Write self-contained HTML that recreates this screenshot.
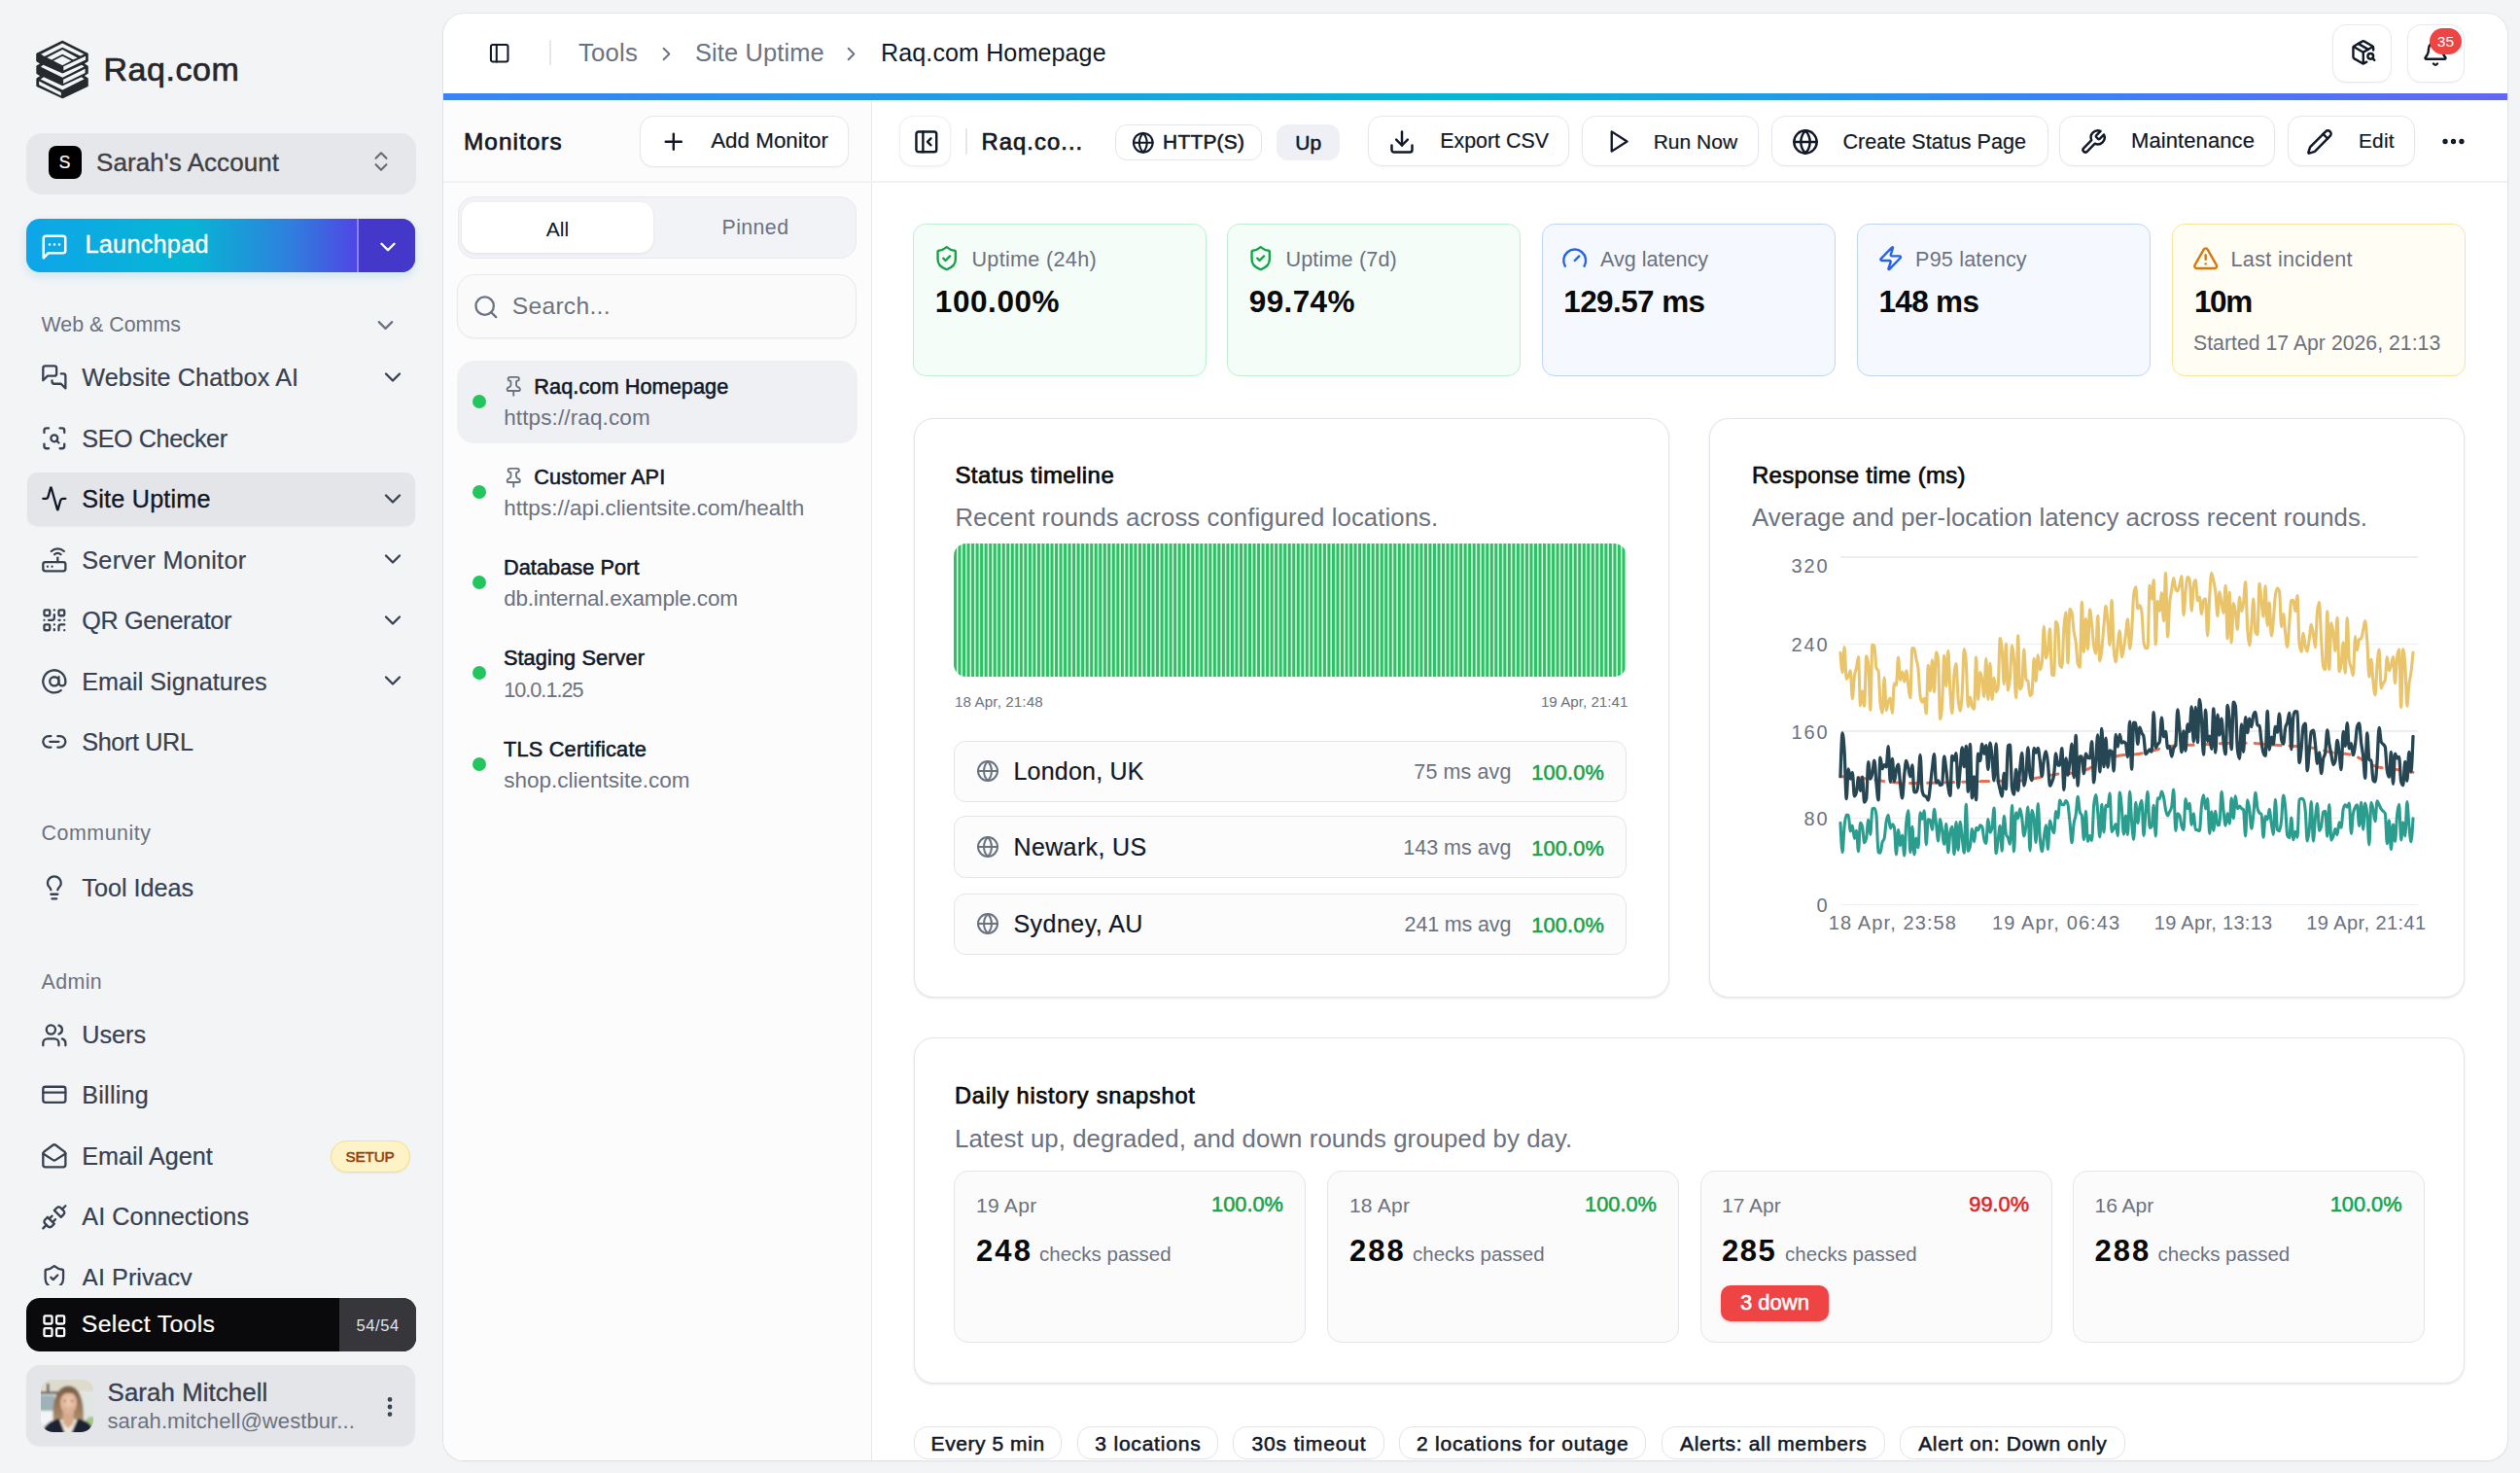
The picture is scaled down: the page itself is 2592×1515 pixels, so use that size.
<!DOCTYPE html><html><head><meta charset="utf-8"><style>*{margin:0;padding:0;box-sizing:border-box}html,body{width:2592px;height:1515px;overflow:hidden;background:#f3f4f6;font-family:"Liberation Sans",sans-serif}.a{position:absolute}.t{position:absolute;white-space:nowrap;line-height:1}svg.i{position:absolute;fill:none;stroke:currentColor;stroke-linecap:round;stroke-linejoin:round;overflow:visible}</style></head><body>
<svg class="a" style="left:30px;top:36px;width:70px;height:70px" viewBox="0 0 1473 1473">
<path fill="#262a2e" stroke="#262a2e" stroke-width="24" stroke-linejoin="round" d="M720 130 L1266 406 L1266 563 L1176 619 L1266 676 L1266 828 L1174 882 L1266 942 L1266 1105 L723 1360 L167 1105 L167 947 L256 882 L167 833 L167 671 L255 619 L165 563 L165 406 Z"/>
<g fill="#f3f4f6">
<path d="M254.8 416 L720.3 179.4 L1188.4 416 L1106.2 454.6 L720.3 266.8 L332 462.3 Z"/>
<path d="M386 490.6 L720.3 313.1 L1047 493.1 L949.3 531.7 L720.3 413.4 L486.3 534.3 Z"/>
<path d="M524.9 557.5 L720.3 459.7 L913.2 557.5 L720.3 655.2 Z"/>
<path d="M743.5 680.9 L1221.9 459.7 L1221.9 536.9 L743.5 768.4 Z"/>
<path d="M251 686.8 L305.3 648.8 L723.2 833.3 L1135.6 648.8 L1192.6 681.4 L723.2 920.1 Z"/>
<path d="M739.5 963.6 L1211.6 732.9 L1211.6 822.5 L739.5 1050.4 Z"/>
<path d="M245.6 958.1 L316.1 909.3 L723.2 1102 L1130.2 909.3 L1192.6 952.7 L723.2 1191.5 Z"/>
<path d="M213 1001.6 L690.6 1240.3 L690.6 1316.3 L213 1077.5 Z"/>
</g>
</svg>
<div class="t" style="top:54.42px;font-size:34px;color:#27272a;-webkit-text-stroke:0.7px #27272a;letter-spacing:0.525px;left:106.50px;">Raq.com</div>
<div class="a" style="left:27.00px;top:137.00px;width:401.00px;height:63.00px;background:#e5e7eb;border-radius:16px;"></div>
<div class="a" style="left:49.50px;top:150.00px;width:34.00px;height:34.00px;background:#000;border-radius:8px;"></div>
<div class="t" style="top:158.69px;font-size:17.5px;color:#fff;-webkit-text-stroke:0.2px #fff;left:-433.50px;width:1000px;text-align:center;">S</div>
<div class="t" style="top:154.49px;font-size:26px;color:#3f3f46;-webkit-text-stroke:0.35px #3f3f46;letter-spacing:0.065px;left:99.00px;">Sarah's Account</div>
<svg class="i" style="left:378.50px;top:153.00px;width:26px;height:26px;color:#6b6b73;" viewBox="0 0 24 24" stroke-width="2"><path d="m7 15 5 5 5-5"/><path d="m7 9 5-5 5 5"/></svg>
<div class="a" style="left:27.00px;top:225.00px;width:400.00px;height:55.00px;background:linear-gradient(90deg,#0ea5e9 0%,#06b6d4 42%,#2f7fdd 68%,#4f46e5 85%);border-radius:14px;box-shadow:0 4px 10px rgba(14,165,233,0.18);"></div>
<div class="a" style="left:367.50px;top:225.00px;width:59.50px;height:55.00px;background:#4338ca;border-top-right-radius:14px;border-bottom-right-radius:14px;"></div>
<div class="a" style="left:367.00px;top:225.00px;width:1.50px;height:55.00px;background:rgba(165,160,255,0.7);"></div>
<svg class="i" style="left:40.70px;top:238.80px;width:30px;height:30px;color:#fff;" viewBox="0 0 24 24" stroke-width="2"><path d="M21 15a2 2 0 0 1-2 2H7l-4 4V5a2 2 0 0 1 2-2h14a2 2 0 0 1 2 2z"/><path d="M8 10h.01"/><path d="M12 10h.01"/><path d="M16 10h.01"/></svg>
<div class="t" style="top:239.38px;font-size:25.3px;color:#fff;-webkit-text-stroke:0.35px #fff;letter-spacing:0.225px;left:87.50px;">Launchpad</div>
<svg class="i" style="left:386.00px;top:240.50px;width:26px;height:26px;color:#fff;" viewBox="0 0 24 24" stroke-width="2.2"><path d="m6 9 6 6 6-6"/></svg>
<div class="t" style="top:323.88px;font-size:21.4px;color:#6b7280;left:42.50px;">Web &amp; Comms</div>
<svg class="i" style="left:383.20px;top:320.50px;width:27px;height:27px;color:#6b7280;" viewBox="0 0 24 24" stroke-width="2"><path d="m6 9 6 6 6-6"/></svg>
<div class="a" style="left:27.80px;top:485.70px;width:399.20px;height:54.90px;background:#e4e5e9;border-radius:10px;box-shadow:0 1px 2px rgba(0,0,0,0.04);"></div>
<svg class="i" style="left:42.35px;top:374.05px;width:27.7px;height:27.7px;color:#374151;" viewBox="0 0 24 24" stroke-width="2"><path d="M14 9a2 2 0 0 1-2 2H6l-4 4V4a2 2 0 0 1 2-2h8a2 2 0 0 1 2 2z"/><path d="M18 9h2a2 2 0 0 1 2 2v11l-4-4h-6a2 2 0 0 1-2-2v-1"/></svg>
<div class="t" style="top:376.17px;font-size:25.2px;color:#374151;-webkit-text-stroke:0.2px #374151;letter-spacing:0.122px;left:84.30px;">Website Chatbox AI</div>
<svg class="i" style="left:390.00px;top:373.90px;width:28px;height:28px;color:#374151;" viewBox="0 0 24 24" stroke-width="2"><path d="m6 9 6 6 6-6"/></svg>
<svg class="i" style="left:42.35px;top:436.55px;width:27.7px;height:27.7px;color:#374151;" viewBox="0 0 24 24" stroke-width="2"><path d="M3 7V5a2 2 0 0 1 2-2h2"/><path d="M17 3h2a2 2 0 0 1 2 2v2"/><path d="M21 17v2a2 2 0 0 1-2 2h-2"/><path d="M7 21H5a2 2 0 0 1-2-2v-2"/><circle cx="12" cy="12" r="3"/><path d="m16 16-1.9-1.9"/></svg>
<div class="t" style="top:438.67px;font-size:25.2px;color:#374151;-webkit-text-stroke:0.2px #374151;letter-spacing:-0.423px;left:84.30px;">SEO Checker</div>
<svg class="i" style="left:42.35px;top:499.05px;width:27.7px;height:27.7px;color:#111827;" viewBox="0 0 24 24" stroke-width="2"><path d="M22 12h-2.48a2 2 0 0 0-1.93 1.46l-2.35 8.36a.25.25 0 0 1-.48 0L9.24 2.18a.25.25 0 0 0-.48 0l-2.35 8.36A2 2 0 0 1 4.49 12H2"/></svg>
<div class="t" style="top:501.17px;font-size:25.2px;color:#111827;-webkit-text-stroke:0.35px #111827;letter-spacing:0.207px;left:84.30px;">Site Uptime</div>
<svg class="i" style="left:390.00px;top:498.90px;width:28px;height:28px;color:#374151;" viewBox="0 0 24 24" stroke-width="2"><path d="m6 9 6 6 6-6"/></svg>
<svg class="i" style="left:42.35px;top:561.55px;width:27.7px;height:27.7px;color:#374151;" viewBox="0 0 24 24" stroke-width="2"><rect width="20" height="8" x="2" y="14" rx="2"/><path d="M6.01 18H6"/><path d="M10.01 18H10"/><path d="M15 10v4"/><path d="M17.84 7.17a4 4 0 0 0-5.66 0"/><path d="M20.66 4.34a8 8 0 0 0-11.31 0"/></svg>
<div class="t" style="top:563.67px;font-size:25.2px;color:#374151;-webkit-text-stroke:0.2px #374151;letter-spacing:0.277px;left:84.30px;">Server Monitor</div>
<svg class="i" style="left:390.00px;top:561.40px;width:28px;height:28px;color:#374151;" viewBox="0 0 24 24" stroke-width="2"><path d="m6 9 6 6 6-6"/></svg>
<svg class="i" style="left:42.35px;top:624.05px;width:27.7px;height:27.7px;color:#374151;" viewBox="0 0 24 24" stroke-width="2"><rect width="5" height="5" x="3" y="3" rx="1"/><rect width="5" height="5" x="16" y="3" rx="1"/><rect width="5" height="5" x="3" y="16" rx="1"/><path d="M21 16h-3a2 2 0 0 0-2 2v3"/><path d="M21 21v.01"/><path d="M12 7v3a2 2 0 0 1-2 2H7"/><path d="M3 12h.01"/><path d="M12 3h.01"/><path d="M12 16v.01"/><path d="M16 12h1"/><path d="M21 12v.01"/><path d="M12 21v-1"/></svg>
<div class="t" style="top:626.17px;font-size:25.2px;color:#374151;-webkit-text-stroke:0.2px #374151;letter-spacing:-0.376px;left:84.30px;">QR Generator</div>
<svg class="i" style="left:390.00px;top:623.90px;width:28px;height:28px;color:#374151;" viewBox="0 0 24 24" stroke-width="2"><path d="m6 9 6 6 6-6"/></svg>
<svg class="i" style="left:42.35px;top:686.55px;width:27.7px;height:27.7px;color:#374151;" viewBox="0 0 24 24" stroke-width="2"><circle cx="12" cy="12" r="4"/><path d="M16 8v5a3 3 0 0 0 6 0v-1a10 10 0 1 0-4 8"/></svg>
<div class="t" style="top:688.67px;font-size:25.2px;color:#374151;-webkit-text-stroke:0.2px #374151;left:84.30px;">Email Signatures</div>
<svg class="i" style="left:390.00px;top:686.40px;width:28px;height:28px;color:#374151;" viewBox="0 0 24 24" stroke-width="2"><path d="m6 9 6 6 6-6"/></svg>
<svg class="i" style="left:42.35px;top:749.05px;width:27.7px;height:27.7px;color:#374151;" viewBox="0 0 24 24" stroke-width="2"><path d="M9 17H7A5 5 0 0 1 7 7h2"/><path d="M15 7h2a5 5 0 1 1 0 10h-2"/><line x1="8" x2="16" y1="12" y2="12"/></svg>
<div class="t" style="top:751.17px;font-size:25.2px;color:#374151;-webkit-text-stroke:0.2px #374151;letter-spacing:-0.371px;left:84.30px;">Short URL</div>
<div class="t" style="top:846.88px;font-size:21.4px;color:#6b7280;letter-spacing:0.546px;left:42.50px;">Community</div>
<svg class="i" style="left:42.35px;top:899.15px;width:27.7px;height:27.7px;color:#374151;" viewBox="0 0 24 24" stroke-width="2"><path d="M15 14c.2-1 .7-1.7 1.5-2.5 1-.9 1.5-2.2 1.5-3.5A6 6 0 0 0 6 8c0 1 .2 2.2 1.5 3.5.7.7 1.3 1.5 1.5 2.5"/><path d="M9 18h6"/><path d="M10 22h4"/></svg>
<div class="t" style="top:900.67px;font-size:25.2px;color:#374151;-webkit-text-stroke:0.2px #374151;left:84.30px;">Tool Ideas</div>
<div class="t" style="top:999.88px;font-size:21.4px;color:#6b7280;letter-spacing:0.4px;left:42.50px;">Admin</div>
<div class="a" style="left:0;top:0;width:455px;height:1322px;overflow:hidden">
<svg class="i" style="left:42.35px;top:1050.95px;width:27.7px;height:27.7px;color:#374151;" viewBox="0 0 24 24" stroke-width="2"><path d="M16 21v-2a4 4 0 0 0-4-4H6a4 4 0 0 0-4 4v2"/><circle cx="9" cy="7" r="4"/><path d="M22 21v-2a4 4 0 0 0-3-3.87"/><path d="M16 3.13a4 4 0 0 1 0 7.75"/></svg>
<div class="t" style="top:1052.47px;font-size:25.2px;color:#374151;-webkit-text-stroke:0.2px #374151;left:84.30px;">Users</div>
<svg class="i" style="left:42.35px;top:1112.45px;width:27.7px;height:27.7px;color:#374151;" viewBox="0 0 24 24" stroke-width="2"><rect width="20" height="14" x="2" y="5" rx="2"/><line x1="2" x2="22" y1="10" y2="10"/></svg>
<div class="t" style="top:1113.97px;font-size:25.2px;color:#374151;-webkit-text-stroke:0.2px #374151;letter-spacing:0.21px;left:84.30px;">Billing</div>
<svg class="i" style="left:42.35px;top:1175.15px;width:27.7px;height:27.7px;color:#374151;" viewBox="0 0 24 24" stroke-width="2"><path d="M21.2 8.4c.5.38.8.97.8 1.6v10a2 2 0 0 1-2 2H4a2 2 0 0 1-2-2V10a2 2 0 0 1 .8-1.6l8-6a2 2 0 0 1 2.4 0l8 6Z"/><path d="m22 10-8.97 5.7a1.94 1.94 0 0 1-2.06 0L2 10"/></svg>
<div class="t" style="top:1176.67px;font-size:25.2px;color:#374151;-webkit-text-stroke:0.2px #374151;left:84.30px;">Email Agent</div>
<svg class="i" style="left:42.35px;top:1237.55px;width:27.7px;height:27.7px;color:#374151;" viewBox="0 0 24 24" stroke-width="2"><path d="m19 5 3-3"/><path d="m2 22 3-3"/><path d="M6.3 20.3a2.4 2.4 0 0 0 3.4 0L12 18l-6-6-2.3 2.3a2.4 2.4 0 0 0 0 3.4Z"/><path d="M7.5 13.5 10 11"/><path d="M10.5 16.5 13 14"/><path d="m12 6 6 6 2.3-2.3a2.4 2.4 0 0 0 0-3.4l-2.6-2.6a2.4 2.4 0 0 0-3.4 0Z"/></svg>
<div class="t" style="top:1239.07px;font-size:25.2px;color:#374151;-webkit-text-stroke:0.2px #374151;letter-spacing:0.069px;left:84.30px;">AI Connections</div>
<svg class="i" style="left:42.35px;top:1300.15px;width:27.7px;height:27.7px;color:#374151;" viewBox="0 0 24 24" stroke-width="2"><path d="M20 13c0 5-3.5 7.5-7.66 8.95a1 1 0 0 1-.67-.01C7.5 20.5 4 18 4 13V6a1 1 0 0 1 1-1c2 0 4.5-1.2 6.24-2.72a1.17 1.17 0 0 1 1.52 0C14.51 3.81 17 5 19 5a1 1 0 0 1 1 1z"/><path d="m9 12 2 2 4-4"/></svg>
<div class="t" style="top:1301.67px;font-size:25.2px;color:#374151;-webkit-text-stroke:0.2px #374151;left:84.30px;">AI Privacy</div>
</div>
<div class="a" style="left:339.80px;top:1172.50px;width:81.90px;height:33.80px;background:#fef3c7;border:1.5px solid #f8de7e;border-radius:17px;box-shadow:0 1px 2px rgba(0,0,0,0.05);"></div>
<div class="t" style="top:1182.25px;font-size:15.3px;color:#92400e;-webkit-text-stroke:0.55px #92400e;letter-spacing:-0.2px;left:-119.40px;width:1000px;text-align:center;">SETUP</div>
<div class="a" style="left:27.00px;top:1335.00px;width:400.50px;height:55.30px;background:#0a0a0c;border-radius:14px;"></div>
<div class="a" style="left:349.00px;top:1335.00px;width:78.50px;height:55.30px;background:#36363b;border-top-right-radius:14px;border-bottom-right-radius:14px;"></div>
<svg class="i" style="left:41.90px;top:1349.90px;width:27.6px;height:27.6px;color:#fff;" viewBox="0 0 24 24" stroke-width="2"><rect width="7" height="7" x="3" y="3" rx="1"/><rect width="7" height="7" x="14" y="3" rx="1"/><rect width="7" height="7" x="14" y="14" rx="1"/><rect width="7" height="7" x="3" y="14" rx="1"/></svg>
<div class="t" style="top:1349.81px;font-size:24.8px;color:#fff;-webkit-text-stroke:0.2px #fff;letter-spacing:0.36px;left:83.80px;">Select Tools</div>
<div class="t" style="top:1354.53px;font-size:16.5px;color:#e4e4e7;letter-spacing:0.6px;left:-111.40px;width:1000px;text-align:center;">54/54</div>
<div class="a" style="left:27.00px;top:1404.00px;width:400.00px;height:83.00px;background:#e4e5e9;border-radius:14px;box-shadow:0 1px 2px rgba(0,0,0,0.05);"></div>
<svg class="a" style="left:41.8px;top:1419px;width:54px;height:54px" viewBox="0 0 54 54">
<defs><clipPath id="av"><path d="M11 0 H43 A11 11 0 0 1 54 11 V41 A13 13 0 0 1 41 54 H13 A13 13 0 0 1 0 41 V11 A11 11 0 0 1 11 0Z"/></clipPath>
<filter id="bl" x="-10%" y="-10%" width="120%" height="120%"><feGaussianBlur stdDeviation="0.85"/></filter>
<linearGradient id="hair" x1="0" y1="0" x2="0" y2="1"><stop offset="0" stop-color="#7d6049"/><stop offset="0.6" stop-color="#9a7b5e"/><stop offset="1" stop-color="#b39574"/></linearGradient>
<radialGradient id="skin" cx="0.5" cy="0.45" r="0.6"><stop offset="0" stop-color="#f0cdb4"/><stop offset="1" stop-color="#d9a98b"/></radialGradient>
</defs>
<g clip-path="url(#av)"><g filter="url(#bl)">
<rect x="-2" y="-2" width="58" height="58" fill="#e5e7e4"/>
<rect x="-2" y="-2" width="58" height="14" fill="#dedbcd"/>
<rect x="6" y="4" width="2.5" height="10" fill="#4a4944"/>
<rect x="-2" y="12" width="22" height="3" fill="#6f6e68"/>
<rect x="-2" y="16" width="16" height="16" fill="#9fb2b8"/>
<rect x="-2" y="32" width="15" height="14" fill="#f2f4f5"/>
<rect x="40" y="14" width="16" height="28" fill="#e1e6e3"/>
<ellipse cx="52" cy="44" rx="6" ry="6" fill="#a5c48b"/>
<path d="M13.5 46 C11 30 13 7 28 6.5 C42 6 45.5 28 43.5 46 Z" fill="url(#hair)"/>
<path d="M16 41 L22 56 L34 56 L40 41 Z" fill="#eee6da"/>
<path d="M22.5 31 L34 31 L33.5 45 L28 50 L23 45 Z" fill="#d8aa8c"/>
<ellipse cx="28.5" cy="24" rx="8.6" ry="11.8" fill="url(#skin)"/>
<path d="M19.5 17 C21 9.5 35 9 37.5 17 C34 12.5 24 12.5 19.5 17Z" fill="#7d6049"/>
<ellipse cx="25" cy="22" rx="1.3" ry="0.8" fill="#6a4a3a"/>
<ellipse cx="32" cy="22" rx="1.3" ry="0.8" fill="#6a4a3a"/>
<path d="M24 29.5 Q28.5 33.5 33 29.5 Q28.5 31.2 24 29.5Z" fill="#fbf3ee" stroke="#c88a7c" stroke-width="0.6"/>
<path d="M1 56 C3 46 11 41.5 19 40 L25 56 Z" fill="#1b2333"/>
<path d="M55 56 C54 46 46 41.5 38 40 L31 56 Z" fill="#1b2333"/>
</g></g></svg>
<div class="t" style="top:1420.16px;font-size:25.8px;color:#374151;-webkit-text-stroke:0.35px #374151;letter-spacing:0.097px;left:110.60px;">Sarah Mitchell</div>
<div class="t" style="top:1450.88px;font-size:22px;color:#6b7280;letter-spacing:0.094px;left:110.40px;">sarah.mitchell@westbur...</div>
<svg class="i" style="left:387.50px;top:1433.50px;width:26px;height:26px;color:#374151;" viewBox="0 0 24 24" stroke-width="2.4"><circle cx="12" cy="12" r="1"/><circle cx="12" cy="5" r="1"/><circle cx="12" cy="19" r="1"/></svg>
<div class="a" style="left:456.00px;top:13.50px;width:2122.50px;height:1488.00px;background:#fff;border-radius:21px;box-shadow:0 0 0 1px rgba(17,24,39,0.05),0 1px 3px rgba(17,24,39,0.06);"></div>
<div class="a" style="left:456px;top:13.5px;width:2122.5px;height:1488px;border-radius:21px;overflow:hidden">
<div class="a" style="left:-456px;top:-13.5px;width:2592px;height:1515px">
<div class="a" style="left:456.00px;top:103.00px;width:440.00px;height:1398.50px;background:#fcfcfd;"></div>
<div class="a" style="left:456.00px;top:96.00px;width:2122.50px;height:7.00px;background:linear-gradient(90deg,#3b82f6 0%,#06b6d4 50%,#3b82f6 78%,#6366f1 100%);"></div>
<div class="a" style="left:895.50px;top:103.00px;width:1.70px;height:1398.50px;background:#e7e8ec;"></div>
<div class="a" style="left:456.00px;top:186.30px;width:2122.50px;height:1.50px;background:#f0f1f4;"></div>
<svg class="i" style="left:502.00px;top:43.30px;width:23.4px;height:23.4px;color:#111827;" viewBox="0 0 24 24" stroke-width="2.1"><rect width="18" height="18" x="3" y="3" rx="2"/><path d="M9 3v18"/></svg>
<div class="a" style="left:565.30px;top:40.70px;width:1.50px;height:26.30px;background:#e5e7eb;"></div>
<div class="t" style="top:41.54px;font-size:25.7px;color:#6b7280;letter-spacing:0.225px;left:595.00px;">Tools</div>
<svg class="i" style="left:674.00px;top:43.50px;width:23px;height:23px;color:#6b7280;" viewBox="0 0 24 24" stroke-width="2"><path d="m9 18 6-6-6-6"/></svg>
<div class="t" style="top:41.80px;font-size:25.4px;color:#6b7280;letter-spacing:0.144px;left:715.00px;">Site Uptime</div>
<svg class="i" style="left:864.00px;top:43.50px;width:23px;height:23px;color:#6b7280;" viewBox="0 0 24 24" stroke-width="2"><path d="m9 18 6-6-6-6"/></svg>
<div class="t" style="top:42.05px;font-size:25.1px;color:#111827;letter-spacing:0.096px;left:906.00px;">Raq.com Homepage</div>
<div class="a" style="left:2399.20px;top:24.50px;width:60.70px;height:60.00px;background:#fff;border:1.5px solid #e8e9ee;border-radius:14px;box-shadow:0 1px 2px rgba(0,0,0,0.04);"></div>
<svg class="i" style="left:2417.10px;top:40.40px;width:27.6px;height:27.6px;color:#111827;" viewBox="0 0 24 24" stroke-width="2.1"><path d="M21 10V8a2 2 0 0 0-1-1.73l-7-4a2 2 0 0 0-2 0l-7 4A2 2 0 0 0 3 8v8a2 2 0 0 0 1 1.73l7 4a2 2 0 0 0 2 0l2-1.14"/><path d="m7.5 4.27 9 5.15"/><polyline points="3.29 7 12 12 20.71 7"/><line x1="12" x2="12" y1="22" y2="12"/><circle cx="18.5" cy="15.5" r="2.5"/><path d="M20.27 17.27 22 19"/></svg>
<div class="a" style="left:2475.50px;top:24.50px;width:59.70px;height:60.00px;background:#fff;border:1.5px solid #e8e9ee;border-radius:14px;box-shadow:0 1px 2px rgba(0,0,0,0.04);"></div>
<svg class="i" style="left:2491.40px;top:41.40px;width:28px;height:28px;color:#111827;" viewBox="0 0 24 24" stroke-width="2.1"><path d="M10.268 21a2 2 0 0 0 3.464 0"/><path d="M3.262 15.326A1 1 0 0 0 4 17h16a1 1 0 0 0 .74-1.673C19.41 13.956 18 12.499 18 8A6 6 0 0 0 6 8c0 4.499-1.411 5.956-2.738 7.326"/></svg>
<div class="a" style="left:2499.00px;top:28.70px;width:32.80px;height:27.10px;background:#ef4444;border-radius:14px;"></div>
<div class="t" style="top:34.78px;font-size:15.5px;color:#fff;left:2015.40px;width:1000px;text-align:center;">35</div>
<div class="t" style="top:134.43px;font-size:24.3px;color:#111827;-webkit-text-stroke:0.7px #111827;letter-spacing:1.067px;left:477.00px;">Monitors</div>
<div class="a" style="left:657.80px;top:119.00px;width:215.70px;height:52.50px;background:#fff;border:1.5px solid #e6e7ec;border-radius:14px;box-shadow:0 1px 2px rgba(0,0,0,0.04);"></div>
<svg class="i" style="left:679.40px;top:131.80px;width:27.6px;height:27.6px;color:#111827;" viewBox="0 0 24 24" stroke-width="2.1"><path d="M5 12h14"/><path d="M12 5v14"/></svg>
<div class="t" style="top:133.84px;font-size:22.4px;color:#111827;-webkit-text-stroke:0.2px #111827;left:731.20px;">Add Monitor</div>
<div class="a" style="left:470.50px;top:201.70px;width:410.30px;height:64.60px;background:#f2f3f7;border:1.5px solid #e8e9ee;border-radius:17px;"></div>
<div class="a" style="left:474.80px;top:208.00px;width:197.40px;height:51.80px;background:#fff;border-radius:14px;box-shadow:0 1px 3px rgba(0,0,0,0.08);"></div>
<div class="t" style="top:224.62px;font-size:21px;color:#111827;left:73.50px;width:1000px;text-align:center;">All</div>
<div class="t" style="top:224.37px;font-size:21.3px;color:#6b7280;letter-spacing:0.414px;left:277.01px;width:1000px;text-align:center;">Pinned</div>
<div class="a" style="left:470.40px;top:281.60px;width:410.60px;height:66.70px;background:#fafafb;border:1.5px solid #e8e9ee;border-radius:18px;box-shadow:0 1px 2px rgba(0,0,0,0.04);"></div>
<svg class="i" style="left:485.70px;top:301.50px;width:27.6px;height:27.6px;color:#6b7280;" viewBox="0 0 24 24" stroke-width="2"><circle cx="11" cy="11" r="8"/><path d="m21 21-4.3-4.3"/></svg>
<div class="t" style="top:302.88px;font-size:24.6px;color:#6b7280;letter-spacing:0.281px;left:526.80px;">Search...</div>
<div class="a" style="left:470.00px;top:370.60px;width:412.00px;height:85.00px;background:#eff0f4;border-radius:18px;"></div>
<div class="a" style="left:485.70px;top:406.00px;width:14px;height:14px;border-radius:7px;background:#22c55e"></div>
<svg class="i" style="left:516.65px;top:386.15px;width:22.5px;height:22.5px;color:#6b7280;" viewBox="0 0 24 24" stroke-width="2"><path d="M12 17v5"/><path d="M9 10.76a2 2 0 0 1-1.11 1.79l-1.78.9A2 2 0 0 0 5 15.24V16a1 1 0 0 0 1 1h12a1 1 0 0 0 1-1v-.76a2 2 0 0 0-1.11-1.79l-1.78-.9A2 2 0 0 1 15 10.76V7a1 1 0 0 1 1-1 2 2 0 0 0 0-4H8a2 2 0 0 0 0 4 1 1 0 0 1 1 1z"/></svg>
<div class="t" style="top:387.03px;font-size:21.7px;color:#111827;-webkit-text-stroke:0.55px #111827;letter-spacing:0.072px;left:549.30px;">Raq.com Homepage</div>
<div class="t" style="top:418.95px;font-size:22.5px;color:#6b7280;letter-spacing:0.116px;left:518.20px;">https://raq.com</div>
<div class="a" style="left:485.70px;top:499.40px;width:14px;height:14px;border-radius:7px;background:#22c55e"></div>
<svg class="i" style="left:516.65px;top:479.55px;width:22.5px;height:22.5px;color:#6b7280;" viewBox="0 0 24 24" stroke-width="2"><path d="M12 17v5"/><path d="M9 10.76a2 2 0 0 1-1.11 1.79l-1.78.9A2 2 0 0 0 5 15.24V16a1 1 0 0 0 1 1h12a1 1 0 0 0 1-1v-.76a2 2 0 0 0-1.11-1.79l-1.78-.9A2 2 0 0 1 15 10.76V7a1 1 0 0 1 1-1 2 2 0 0 0 0-4H8a2 2 0 0 0 0 4 1 1 0 0 1 1 1z"/></svg>
<div class="t" style="top:480.43px;font-size:21.7px;color:#111827;-webkit-text-stroke:0.55px #111827;letter-spacing:0.098px;left:549.30px;">Customer API</div>
<div class="t" style="top:512.35px;font-size:22.5px;color:#6b7280;letter-spacing:0.042px;left:518.20px;">https://api.clientsite.com/health</div>
<div class="a" style="left:485.70px;top:592.30px;width:14px;height:14px;border-radius:7px;background:#22c55e"></div>
<div class="t" style="top:573.33px;font-size:21.7px;color:#111827;-webkit-text-stroke:0.55px #111827;letter-spacing:0.083px;left:517.90px;">Database Port</div>
<div class="t" style="top:605.25px;font-size:22.5px;color:#6b7280;letter-spacing:-0.197px;left:518.20px;">db.internal.example.com</div>
<div class="a" style="left:485.70px;top:685.00px;width:14px;height:14px;border-radius:7px;background:#22c55e"></div>
<div class="t" style="top:666.03px;font-size:21.7px;color:#111827;-webkit-text-stroke:0.55px #111827;letter-spacing:0.118px;left:517.90px;">Staging Server</div>
<div class="t" style="top:698.72px;font-size:21.6px;color:#6b7280;letter-spacing:-0.962px;left:518.20px;">10.0.1.25</div>
<div class="a" style="left:485.70px;top:778.60px;width:14px;height:14px;border-radius:7px;background:#22c55e"></div>
<div class="t" style="top:759.63px;font-size:21.7px;color:#111827;-webkit-text-stroke:0.55px #111827;letter-spacing:0.244px;left:517.90px;">TLS Certificate</div>
<div class="t" style="top:791.55px;font-size:22.5px;color:#6b7280;left:518.20px;">shop.clientsite.com</div>
<div class="a" style="left:924.80px;top:119.30px;width:53.60px;height:52.20px;background:#fff;border:1.5px solid #eef0f3;border-radius:14px;box-shadow:0 1px 3px rgba(0,0,0,0.06);"></div>
<svg class="i" style="left:939.05px;top:131.75px;width:27.7px;height:27.7px;color:#111827;" viewBox="0 0 24 24" stroke-width="2.1"><rect width="18" height="18" x="3" y="3" rx="2"/><path d="M9 3v18"/><path d="m16 15-3-3 3-3"/></svg>
<div class="a" style="left:993.20px;top:131.70px;width:1.50px;height:27.80px;background:#e5e7eb;"></div>
<div class="t" style="top:134.25px;font-size:23.8px;color:#111827;-webkit-text-stroke:0.7px #111827;letter-spacing:1.069px;left:1009.40px;">Raq.co...</div>
<div class="a" style="left:1146.60px;top:128.20px;width:151.70px;height:36.50px;background:#fff;border:1.5px solid #e3e5ea;border-radius:12px;"></div>
<svg class="i" style="left:1164.20px;top:134.60px;width:23.6px;height:23.6px;color:#111827;" viewBox="0 0 24 24" stroke-width="2.1"><circle cx="12" cy="12" r="10"/><path d="M12 2a14.5 14.5 0 0 0 0 20 14.5 14.5 0 0 0 0-20"/><path d="M2 12h20"/></svg>
<div class="t" style="top:135.61px;font-size:20.9px;color:#111827;-webkit-text-stroke:0.55px #111827;letter-spacing:0.24px;left:1196.10px;">HTTP(S)</div>
<div class="a" style="left:1312.70px;top:128.20px;width:65.00px;height:36.50px;background:#eef0f6;border-radius:12px;"></div>
<div class="t" style="top:135.52px;font-size:21px;color:#111827;-webkit-text-stroke:0.55px #111827;left:845.70px;width:1000px;text-align:center;">Up</div>
<div class="a" style="left:1406.60px;top:119.10px;width:207.80px;height:52.00px;background:#fff;border:1.5px solid #e6e7ec;border-radius:14px;box-shadow:0 1px 2px rgba(0,0,0,0.04);"></div>
<svg class="i" style="left:1427.60px;top:131.60px;width:28px;height:28px;color:#111827;" viewBox="0 0 24 24" stroke-width="2.1"><path d="M21 15v4a2 2 0 0 1-2 2H5a2 2 0 0 1-2-2v-4"/><polyline points="7 10 12 15 17 10"/><line x1="12" x2="12" y1="15" y2="3"/></svg>
<div class="t" style="top:134.68px;font-size:21.4px;color:#111827;-webkit-text-stroke:0.2px #111827;left:1481.20px;">Export CSV</div>
<div class="a" style="left:1626.60px;top:119.10px;width:182.50px;height:52.00px;background:#fff;border:1.5px solid #e6e7ec;border-radius:14px;box-shadow:0 1px 2px rgba(0,0,0,0.04);"></div>
<svg class="i" style="left:1651.00px;top:132.10px;width:27px;height:27px;color:#111827;" viewBox="0 0 24 24" stroke-width="2.1"><polygon points="6 3 20 12 6 21 6 3"/></svg>
<div class="t" style="top:135.02px;font-size:21px;color:#111827;-webkit-text-stroke:0.2px #111827;left:1700.70px;">Run Now</div>
<div class="a" style="left:1821.80px;top:119.10px;width:285.00px;height:52.00px;background:#fff;border:1.5px solid #e6e7ec;border-radius:14px;box-shadow:0 1px 2px rgba(0,0,0,0.04);"></div>
<svg class="i" style="left:1843.00px;top:131.60px;width:28px;height:28px;color:#111827;" viewBox="0 0 24 24" stroke-width="2.1"><circle cx="12" cy="12" r="10"/><path d="M12 2a14.5 14.5 0 0 0 0 20 14.5 14.5 0 0 0 0-20"/><path d="M2 12h20"/></svg>
<div class="t" style="top:134.52px;font-size:21.6px;color:#111827;-webkit-text-stroke:0.2px #111827;left:1895.50px;">Create Status Page</div>
<div class="a" style="left:2117.60px;top:119.10px;width:222.40px;height:52.00px;background:#fff;border:1.5px solid #e6e7ec;border-radius:14px;box-shadow:0 1px 2px rgba(0,0,0,0.04);"></div>
<svg class="i" style="left:2138.50px;top:131.60px;width:28px;height:28px;color:#111827;" viewBox="0 0 24 24" stroke-width="2.1"><path d="M14.7 6.3a1 1 0 0 0 0 1.4l1.6 1.6a1 1 0 0 0 1.4 0l3.77-3.77a6 6 0 0 1-7.94 7.94l-6.91 6.91a2.12 2.12 0 0 1-3-3l6.91-6.91a6 6 0 0 1 7.94-7.94l-3.76 3.76z"/></svg>
<div class="t" style="top:134.18px;font-size:22px;color:#111827;-webkit-text-stroke:0.2px #111827;letter-spacing:0.09px;left:2192.00px;">Maintenance</div>
<div class="a" style="left:2352.60px;top:119.10px;width:131.80px;height:52.00px;background:#fff;border:1.5px solid #e6e7ec;border-radius:14px;box-shadow:0 1px 2px rgba(0,0,0,0.04);"></div>
<svg class="i" style="left:2372.30px;top:131.60px;width:28px;height:28px;color:#111827;" viewBox="0 0 24 24" stroke-width="2.1"><path d="M21.174 6.812a1 1 0 0 0-3.986-3.987L3.842 16.174a2 2 0 0 0-.5.83l-1.321 4.352a.5.5 0 0 0 .623.622l4.353-1.32a2 2 0 0 0 .83-.497z"/><path d="m15 5 4 4"/></svg>
<div class="t" style="top:135.19px;font-size:20.8px;color:#111827;-webkit-text-stroke:0.2px #111827;letter-spacing:0.24px;left:2426.00px;">Edit</div>
<svg class="i" style="left:2509.00px;top:131.10px;width:29px;height:29px;color:#111827;" viewBox="0 0 24 24" stroke-width="2.4"><circle cx="12" cy="12" r="1"/><circle cx="19" cy="12" r="1"/><circle cx="5" cy="12" r="1"/></svg>
<div class="a" style="left:939.30px;top:230.40px;width:302.00px;height:156.40px;background:#f5fdf8;border:1.7px solid #bcf0cf;border-radius:13px;"></div>
<svg class="i" style="left:959.80px;top:252.40px;width:27.4px;height:27.4px;color:#16a34a;" viewBox="0 0 24 24" stroke-width="2.1"><path d="M20 13c0 5-3.5 7.5-7.66 8.95a1 1 0 0 1-.67-.01C7.5 20.5 4 18 4 13V6a1 1 0 0 1 1-1c2 0 4.5-1.2 6.24-2.72a1.17 1.17 0 0 1 1.52 0C14.51 3.81 17 5 19 5a1 1 0 0 1 1 1z"/><path d="m9 12 2 2 4-4"/></svg>
<div class="t" style="top:255.52px;font-size:21.6px;color:#6b7280;letter-spacing:0.319px;left:999.40px;">Uptime (24h)</div>
<div class="t" style="top:295.14px;font-size:31.5px;color:#0a0a0a;font-weight:700;letter-spacing:0.57px;left:961.80px;">100.00%</div>
<div class="a" style="left:1262.30px;top:230.40px;width:302.00px;height:156.40px;background:#f5fdf8;border:1.7px solid #bcf0cf;border-radius:13px;"></div>
<svg class="i" style="left:1282.80px;top:252.40px;width:27.4px;height:27.4px;color:#16a34a;" viewBox="0 0 24 24" stroke-width="2.1"><path d="M20 13c0 5-3.5 7.5-7.66 8.95a1 1 0 0 1-.67-.01C7.5 20.5 4 18 4 13V6a1 1 0 0 1 1-1c2 0 4.5-1.2 6.24-2.72a1.17 1.17 0 0 1 1.52 0C14.51 3.81 17 5 19 5a1 1 0 0 1 1 1z"/><path d="m9 12 2 2 4-4"/></svg>
<div class="t" style="top:255.52px;font-size:21.6px;color:#6b7280;letter-spacing:0.162px;left:1322.40px;">Uptime (7d)</div>
<div class="t" style="top:295.14px;font-size:31.5px;color:#0a0a0a;font-weight:700;letter-spacing:0.36px;left:1284.80px;">99.74%</div>
<div class="a" style="left:1585.80px;top:230.40px;width:302.00px;height:156.40px;background:#f5f9ff;border:1.7px solid #bcd6f8;border-radius:13px;"></div>
<svg class="i" style="left:1606.30px;top:252.40px;width:27.4px;height:27.4px;color:#2563eb;" viewBox="0 0 24 24" stroke-width="2.1"><path d="m12 14 4-4"/><path d="M3.34 19a10 10 0 1 1 17.32 0"/></svg>
<div class="t" style="top:255.52px;font-size:21.6px;color:#6b7280;left:1645.90px;">Avg latency</div>
<div class="t" style="top:295.14px;font-size:31.5px;color:#0a0a0a;font-weight:700;letter-spacing:-0.607px;left:1608.30px;">129.57 ms</div>
<div class="a" style="left:1910.00px;top:230.40px;width:302.00px;height:156.40px;background:#f5f9ff;border:1.7px solid #bcd6f8;border-radius:13px;"></div>
<svg class="i" style="left:1930.50px;top:252.40px;width:27.4px;height:27.4px;color:#2563eb;" viewBox="0 0 24 24" stroke-width="2.1"><path d="M4 14a1 1 0 0 1-.78-1.63l9.9-10.2a.5.5 0 0 1 .86.46l-1.92 6.02A1 1 0 0 0 13 10h7a1 1 0 0 1 .78 1.63l-9.9 10.2a.5.5 0 0 1-.86-.46l1.92-6.02A1 1 0 0 0 11 14z"/></svg>
<div class="t" style="top:255.52px;font-size:21.6px;color:#6b7280;letter-spacing:0.171px;left:1970.10px;">P95 latency</div>
<div class="t" style="top:295.14px;font-size:31.5px;color:#0a0a0a;font-weight:700;letter-spacing:-0.684px;left:1932.50px;">148 ms</div>
<div class="a" style="left:2234.40px;top:230.40px;width:302.00px;height:156.40px;background:#fffdf4;border:1.7px solid #fbe39a;border-radius:13px;"></div>
<svg class="i" style="left:2254.90px;top:252.40px;width:27.4px;height:27.4px;color:#d97706;" viewBox="0 0 24 24" stroke-width="2.1"><path d="m21.73 18-8-14a2 2 0 0 0-3.48 0l-8 14A2 2 0 0 0 4 21h16a2 2 0 0 0 1.73-3"/><path d="M12 9v4"/><path d="M12 17h.01"/></svg>
<div class="t" style="top:255.52px;font-size:21.6px;color:#6b7280;letter-spacing:0.315px;left:2294.50px;">Last incident</div>
<div class="t" style="top:295.14px;font-size:31.5px;color:#0a0a0a;font-weight:700;letter-spacing:-1.35px;left:2256.90px;">10m</div>
<div class="t" style="top:341.55px;font-size:21.2px;color:#6b7280;letter-spacing:0.036px;left:2256.00px;">Started 17 Apr 2026, 21:13</div>
<div class="a" style="left:939.80px;top:430.00px;width:776.90px;height:595.70px;background:#fff;border:1.5px solid #e4e5ea;border-radius:20px;box-shadow:0 1px 3px rgba(16,24,40,0.07),0 1px 2px rgba(16,24,40,0.04);"></div>
<div class="t" style="top:476.78px;font-size:24px;color:#0a0a0a;-webkit-text-stroke:0.7px #0a0a0a;letter-spacing:0.424px;left:982.40px;">Status timeline</div>
<div class="t" style="top:520.04px;font-size:25.7px;color:#6b7280;letter-spacing:0.101px;left:982.40px;">Recent rounds across configured locations.</div>
<svg class="a" style="left:980.8px;top:558.8px;width:692px;height:137px" viewBox="0 0 692 137"><defs><clipPath id="tb"><rect width="692" height="137" rx="13"/></clipPath></defs><g clip-path="url(#tb)"><rect width="692" height="137" fill="#d4f7e0"/>
<g fill="#2fbf64"><rect x="0.00" y="0" width="2.97" height="137"/><rect x="4.52" y="0" width="2.97" height="137"/><rect x="9.05" y="0" width="2.97" height="137"/><rect x="13.57" y="0" width="2.97" height="137"/><rect x="18.09" y="0" width="2.97" height="137"/><rect x="22.61" y="0" width="2.97" height="137"/><rect x="27.14" y="0" width="2.97" height="137"/><rect x="31.66" y="0" width="2.97" height="137"/><rect x="36.18" y="0" width="2.97" height="137"/><rect x="40.71" y="0" width="2.97" height="137"/><rect x="45.23" y="0" width="2.97" height="137"/><rect x="49.75" y="0" width="2.97" height="137"/><rect x="54.27" y="0" width="2.97" height="137"/><rect x="58.80" y="0" width="2.97" height="137"/><rect x="63.32" y="0" width="2.97" height="137"/><rect x="67.84" y="0" width="2.97" height="137"/><rect x="72.37" y="0" width="2.97" height="137"/><rect x="76.89" y="0" width="2.97" height="137"/><rect x="81.41" y="0" width="2.97" height="137"/><rect x="85.93" y="0" width="2.97" height="137"/><rect x="90.46" y="0" width="2.97" height="137"/><rect x="94.98" y="0" width="2.97" height="137"/><rect x="99.50" y="0" width="2.97" height="137"/><rect x="104.03" y="0" width="2.97" height="137"/><rect x="108.55" y="0" width="2.97" height="137"/><rect x="113.07" y="0" width="2.97" height="137"/><rect x="117.59" y="0" width="2.97" height="137"/><rect x="122.12" y="0" width="2.97" height="137"/><rect x="126.64" y="0" width="2.97" height="137"/><rect x="131.16" y="0" width="2.97" height="137"/><rect x="135.69" y="0" width="2.97" height="137"/><rect x="140.21" y="0" width="2.97" height="137"/><rect x="144.73" y="0" width="2.97" height="137"/><rect x="149.25" y="0" width="2.97" height="137"/><rect x="153.78" y="0" width="2.97" height="137"/><rect x="158.30" y="0" width="2.97" height="137"/><rect x="162.82" y="0" width="2.97" height="137"/><rect x="167.35" y="0" width="2.97" height="137"/><rect x="171.87" y="0" width="2.97" height="137"/><rect x="176.39" y="0" width="2.97" height="137"/><rect x="180.92" y="0" width="2.97" height="137"/><rect x="185.44" y="0" width="2.97" height="137"/><rect x="189.96" y="0" width="2.97" height="137"/><rect x="194.48" y="0" width="2.97" height="137"/><rect x="199.01" y="0" width="2.97" height="137"/><rect x="203.53" y="0" width="2.97" height="137"/><rect x="208.05" y="0" width="2.97" height="137"/><rect x="212.58" y="0" width="2.97" height="137"/><rect x="217.10" y="0" width="2.97" height="137"/><rect x="221.62" y="0" width="2.97" height="137"/><rect x="226.14" y="0" width="2.97" height="137"/><rect x="230.67" y="0" width="2.97" height="137"/><rect x="235.19" y="0" width="2.97" height="137"/><rect x="239.71" y="0" width="2.97" height="137"/><rect x="244.24" y="0" width="2.97" height="137"/><rect x="248.76" y="0" width="2.97" height="137"/><rect x="253.28" y="0" width="2.97" height="137"/><rect x="257.80" y="0" width="2.97" height="137"/><rect x="262.33" y="0" width="2.97" height="137"/><rect x="266.85" y="0" width="2.97" height="137"/><rect x="271.37" y="0" width="2.97" height="137"/><rect x="275.90" y="0" width="2.97" height="137"/><rect x="280.42" y="0" width="2.97" height="137"/><rect x="284.94" y="0" width="2.97" height="137"/><rect x="289.46" y="0" width="2.97" height="137"/><rect x="293.99" y="0" width="2.97" height="137"/><rect x="298.51" y="0" width="2.97" height="137"/><rect x="303.03" y="0" width="2.97" height="137"/><rect x="307.56" y="0" width="2.97" height="137"/><rect x="312.08" y="0" width="2.97" height="137"/><rect x="316.60" y="0" width="2.97" height="137"/><rect x="321.12" y="0" width="2.97" height="137"/><rect x="325.65" y="0" width="2.97" height="137"/><rect x="330.17" y="0" width="2.97" height="137"/><rect x="334.69" y="0" width="2.97" height="137"/><rect x="339.22" y="0" width="2.97" height="137"/><rect x="343.74" y="0" width="2.97" height="137"/><rect x="348.26" y="0" width="2.97" height="137"/><rect x="352.78" y="0" width="2.97" height="137"/><rect x="357.31" y="0" width="2.97" height="137"/><rect x="361.83" y="0" width="2.97" height="137"/><rect x="366.35" y="0" width="2.97" height="137"/><rect x="370.88" y="0" width="2.97" height="137"/><rect x="375.40" y="0" width="2.97" height="137"/><rect x="379.92" y="0" width="2.97" height="137"/><rect x="384.44" y="0" width="2.97" height="137"/><rect x="388.97" y="0" width="2.97" height="137"/><rect x="393.49" y="0" width="2.97" height="137"/><rect x="398.01" y="0" width="2.97" height="137"/><rect x="402.54" y="0" width="2.97" height="137"/><rect x="407.06" y="0" width="2.97" height="137"/><rect x="411.58" y="0" width="2.97" height="137"/><rect x="416.10" y="0" width="2.97" height="137"/><rect x="420.63" y="0" width="2.97" height="137"/><rect x="425.15" y="0" width="2.97" height="137"/><rect x="429.67" y="0" width="2.97" height="137"/><rect x="434.20" y="0" width="2.97" height="137"/><rect x="438.72" y="0" width="2.97" height="137"/><rect x="443.24" y="0" width="2.97" height="137"/><rect x="447.76" y="0" width="2.97" height="137"/><rect x="452.29" y="0" width="2.97" height="137"/><rect x="456.81" y="0" width="2.97" height="137"/><rect x="461.33" y="0" width="2.97" height="137"/><rect x="465.86" y="0" width="2.97" height="137"/><rect x="470.38" y="0" width="2.97" height="137"/><rect x="474.90" y="0" width="2.97" height="137"/><rect x="479.42" y="0" width="2.97" height="137"/><rect x="483.95" y="0" width="2.97" height="137"/><rect x="488.47" y="0" width="2.97" height="137"/><rect x="492.99" y="0" width="2.97" height="137"/><rect x="497.52" y="0" width="2.97" height="137"/><rect x="502.04" y="0" width="2.97" height="137"/><rect x="506.56" y="0" width="2.97" height="137"/><rect x="511.08" y="0" width="2.97" height="137"/><rect x="515.61" y="0" width="2.97" height="137"/><rect x="520.13" y="0" width="2.97" height="137"/><rect x="524.65" y="0" width="2.97" height="137"/><rect x="529.18" y="0" width="2.97" height="137"/><rect x="533.70" y="0" width="2.97" height="137"/><rect x="538.22" y="0" width="2.97" height="137"/><rect x="542.75" y="0" width="2.97" height="137"/><rect x="547.27" y="0" width="2.97" height="137"/><rect x="551.79" y="0" width="2.97" height="137"/><rect x="556.31" y="0" width="2.97" height="137"/><rect x="560.84" y="0" width="2.97" height="137"/><rect x="565.36" y="0" width="2.97" height="137"/><rect x="569.88" y="0" width="2.97" height="137"/><rect x="574.41" y="0" width="2.97" height="137"/><rect x="578.93" y="0" width="2.97" height="137"/><rect x="583.45" y="0" width="2.97" height="137"/><rect x="587.97" y="0" width="2.97" height="137"/><rect x="592.50" y="0" width="2.97" height="137"/><rect x="597.02" y="0" width="2.97" height="137"/><rect x="601.54" y="0" width="2.97" height="137"/><rect x="606.07" y="0" width="2.97" height="137"/><rect x="610.59" y="0" width="2.97" height="137"/><rect x="615.11" y="0" width="2.97" height="137"/><rect x="619.63" y="0" width="2.97" height="137"/><rect x="624.16" y="0" width="2.97" height="137"/><rect x="628.68" y="0" width="2.97" height="137"/><rect x="633.20" y="0" width="2.97" height="137"/><rect x="637.73" y="0" width="2.97" height="137"/><rect x="642.25" y="0" width="2.97" height="137"/><rect x="646.77" y="0" width="2.97" height="137"/><rect x="651.29" y="0" width="2.97" height="137"/><rect x="655.82" y="0" width="2.97" height="137"/><rect x="660.34" y="0" width="2.97" height="137"/><rect x="664.86" y="0" width="2.97" height="137"/><rect x="669.39" y="0" width="2.97" height="137"/><rect x="673.91" y="0" width="2.97" height="137"/><rect x="678.43" y="0" width="2.97" height="137"/><rect x="682.95" y="0" width="2.97" height="137"/><rect x="687.48" y="0" width="2.97" height="137"/></g></g></svg>
<div class="t" style="top:714.23px;font-size:15.2px;color:#6b7280;letter-spacing:0.097px;left:982.00px;">18 Apr, 21:48</div>
<div class="t" style="top:714.23px;font-size:15.2px;color:#6b7280;right:917.60px;text-align:right;">19 Apr, 21:41</div>
<div class="a" style="left:981.40px;top:761.50px;width:692.10px;height:63.20px;background:#fcfcfd;border:1.5px solid #e4e5ea;border-radius:12px;"></div>
<svg class="i" style="left:1003.50px;top:781.10px;width:24px;height:24px;color:#6b7280;" viewBox="0 0 24 24" stroke-width="2"><circle cx="12" cy="12" r="10"/><path d="M12 2a14.5 14.5 0 0 0 0 20 14.5 14.5 0 0 0 0-20"/><path d="M2 12h20"/></svg>
<div class="t" style="top:780.94px;font-size:25px;color:#111827;-webkit-text-stroke:0.2px #111827;letter-spacing:0.22px;left:1042.50px;">London, UK</div>
<div class="t" style="top:783.90px;font-size:21.5px;color:#6b7280;letter-spacing:0.112px;right:1037.49px;text-align:right;">75 ms avg</div>
<div class="t" style="top:783.65px;font-size:21.8px;color:#16a34a;-webkit-text-stroke:0.55px #16a34a;letter-spacing:0.18px;right:941.82px;text-align:right;">100.0%</div>
<div class="a" style="left:981.40px;top:839.40px;width:692.10px;height:63.20px;background:#fcfcfd;border:1.5px solid #e4e5ea;border-radius:12px;"></div>
<svg class="i" style="left:1003.50px;top:859.00px;width:24px;height:24px;color:#6b7280;" viewBox="0 0 24 24" stroke-width="2"><circle cx="12" cy="12" r="10"/><path d="M12 2a14.5 14.5 0 0 0 0 20 14.5 14.5 0 0 0 0-20"/><path d="M2 12h20"/></svg>
<div class="t" style="top:858.84px;font-size:25px;color:#111827;-webkit-text-stroke:0.2px #111827;letter-spacing:0.37px;left:1042.50px;">Newark, US</div>
<div class="t" style="top:861.80px;font-size:21.5px;color:#6b7280;right:1037.60px;text-align:right;">143 ms avg</div>
<div class="t" style="top:861.55px;font-size:21.8px;color:#16a34a;-webkit-text-stroke:0.55px #16a34a;letter-spacing:0.18px;right:941.82px;text-align:right;">100.0%</div>
<div class="a" style="left:981.40px;top:918.70px;width:692.10px;height:63.20px;background:#fcfcfd;border:1.5px solid #e4e5ea;border-radius:12px;"></div>
<svg class="i" style="left:1003.50px;top:938.30px;width:24px;height:24px;color:#6b7280;" viewBox="0 0 24 24" stroke-width="2"><circle cx="12" cy="12" r="10"/><path d="M12 2a14.5 14.5 0 0 0 0 20 14.5 14.5 0 0 0 0-20"/><path d="M2 12h20"/></svg>
<div class="t" style="top:938.14px;font-size:25px;color:#111827;-webkit-text-stroke:0.2px #111827;letter-spacing:0.45px;left:1042.50px;">Sydney, AU</div>
<div class="t" style="top:941.10px;font-size:21.5px;color:#6b7280;letter-spacing:-0.15px;right:1037.75px;text-align:right;">241 ms avg</div>
<div class="t" style="top:940.85px;font-size:21.8px;color:#16a34a;-webkit-text-stroke:0.55px #16a34a;letter-spacing:0.18px;right:941.82px;text-align:right;">100.0%</div>
<div class="a" style="left:1758.40px;top:430.00px;width:776.90px;height:596.00px;background:#fff;border:1.5px solid #e4e5ea;border-radius:20px;box-shadow:0 1px 3px rgba(16,24,40,0.07),0 1px 2px rgba(16,24,40,0.04);"></div>
<div class="t" style="top:476.78px;font-size:24px;color:#0a0a0a;-webkit-text-stroke:0.7px #0a0a0a;letter-spacing:0.281px;left:1802.00px;">Response time (ms)</div>
<div class="t" style="top:519.66px;font-size:25.8px;color:#6b7280;letter-spacing:0.02px;left:1802.00px;">Average and per-location latency across recent rounds.</div>
<div class="a" style="left:1893.00px;top:572.25px;width:594.00px;height:1.50px;background:#eceef2;"></div>
<div class="a" style="left:1893.00px;top:661.75px;width:594.00px;height:1.50px;background:#eceef2;"></div>
<div class="a" style="left:1893.00px;top:751.25px;width:594.00px;height:1.50px;background:#eceef2;"></div>
<div class="a" style="left:1893.00px;top:840.55px;width:594.00px;height:1.50px;background:#eceef2;"></div>
<div class="a" style="left:1893.00px;top:929.85px;width:594.00px;height:1.50px;background:#eceef2;"></div>
<div class="t" style="top:571.77px;font-size:20px;color:#6b7280;letter-spacing:1.94px;right:710.36px;text-align:right;">320</div>
<div class="t" style="top:652.97px;font-size:20px;color:#6b7280;letter-spacing:1.94px;right:710.36px;text-align:right;">240</div>
<div class="t" style="top:742.57px;font-size:20px;color:#6b7280;letter-spacing:1.94px;right:710.36px;text-align:right;">160</div>
<div class="t" style="top:831.57px;font-size:20px;color:#6b7280;letter-spacing:1.94px;right:710.36px;text-align:right;">80</div>
<div class="t" style="top:920.57px;font-size:20px;color:#6b7280;letter-spacing:1.94px;right:710.36px;text-align:right;">0</div>
<div class="t" style="top:939.47px;font-size:20px;color:#6b7280;letter-spacing:1.1px;left:1446.95px;width:1000px;text-align:center;">18 Apr, 23:58</div>
<div class="t" style="top:939.47px;font-size:20px;color:#6b7280;letter-spacing:1.1px;left:1615.15px;width:1000px;text-align:center;">19 Apr, 06:43</div>
<div class="t" style="top:939.47px;font-size:20px;color:#6b7280;letter-spacing:0.3px;left:1776.65px;width:1000px;text-align:center;">19 Apr, 13:13</div>
<div class="t" style="top:939.47px;font-size:20px;color:#6b7280;letter-spacing:0.4px;left:1933.90px;width:1000px;text-align:center;">19 Apr, 21:41</div>
<svg class="a" style="left:0;top:0;width:2592px;height:1515px;overflow:visible" viewBox="0 0 2592 1515" fill="none" stroke-linejoin="round" stroke-linecap="round">
<path d="M1893.0,798.7C1893.7,798.7 1894.4,798.7 1895.1,798.7C1895.7,798.8 1896.4,798.8 1897.1,798.8C1897.8,798.8 1898.5,798.8 1899.2,798.9C1899.8,798.9 1900.5,798.9 1901.2,799.0C1901.9,799.0 1902.6,799.0 1903.3,799.1C1903.9,799.1 1904.6,799.2 1905.3,799.2C1906.0,799.3 1906.7,799.3 1907.4,799.4C1908.0,799.5 1908.7,799.5 1909.4,799.6C1910.1,799.7 1910.8,799.7 1911.5,799.8C1912.2,799.9 1912.8,800.0 1913.5,800.0C1914.2,800.1 1914.9,800.2 1915.6,800.3C1916.3,800.4 1916.9,800.5 1917.6,800.6C1918.3,800.6 1919.0,800.7 1919.7,800.8C1920.4,800.9 1921.0,801.0 1921.7,801.1C1922.4,801.2 1923.1,801.3 1923.8,801.4C1924.5,801.5 1925.2,801.6 1925.8,801.7C1926.5,801.8 1927.2,801.9 1927.9,802.0C1928.6,802.1 1929.3,802.2 1929.9,802.3C1930.6,802.4 1931.3,802.5 1932.0,802.6C1932.7,802.7 1933.4,802.8 1934.0,802.9C1934.7,803.0 1935.4,803.1 1936.1,803.2C1936.8,803.3 1937.5,803.4 1938.1,803.5C1938.8,803.6 1939.5,803.7 1940.2,803.8C1940.9,803.9 1941.6,803.9 1942.3,804.0C1942.9,804.1 1943.6,804.2 1944.3,804.3C1945.0,804.3 1945.7,804.4 1946.4,804.5C1947.0,804.6 1947.7,804.6 1948.4,804.7C1949.1,804.8 1949.8,804.8 1950.5,804.9C1951.1,804.9 1951.8,805.0 1952.5,805.0C1953.2,805.1 1953.9,805.1 1954.6,805.2C1955.3,805.2 1955.9,805.2 1956.6,805.3C1957.3,805.3 1958.0,805.3 1958.7,805.4C1959.4,805.4 1960.0,805.4 1960.7,805.4C1961.4,805.4 1962.1,805.4 1962.8,805.4C1963.5,805.4 1964.1,805.4 1964.8,805.4C1965.5,805.4 1966.2,805.4 1966.9,805.4C1967.6,805.4 1968.2,805.4 1968.9,805.4C1969.6,805.4 1970.3,805.4 1971.0,805.4C1971.7,805.4 1972.4,805.4 1973.0,805.4C1973.7,805.4 1974.4,805.4 1975.1,805.4C1975.8,805.4 1976.5,805.4 1977.1,805.4C1977.8,805.3 1978.5,805.3 1979.2,805.3C1979.9,805.3 1980.6,805.3 1981.2,805.3C1981.9,805.3 1982.6,805.3 1983.3,805.3C1984.0,805.2 1984.7,805.2 1985.4,805.2C1986.0,805.2 1986.7,805.2 1987.4,805.2C1988.1,805.2 1988.8,805.1 1989.5,805.1C1990.1,805.1 1990.8,805.1 1991.5,805.1C1992.2,805.1 1992.9,805.0 1993.6,805.0C1994.2,805.0 1994.9,805.0 1995.6,805.0C1996.3,805.0 1997.0,804.9 1997.7,804.9C1998.3,804.9 1999.0,804.9 1999.7,804.9C2000.4,804.8 2001.1,804.8 2001.8,804.8C2002.5,804.8 2003.1,804.8 2003.8,804.7C2004.5,804.7 2005.2,804.7 2005.9,804.7C2006.6,804.7 2007.2,804.6 2007.9,804.6C2008.6,804.6 2009.3,804.6 2010.0,804.5C2010.7,804.5 2011.3,804.5 2012.0,804.5C2012.7,804.5 2013.4,804.4 2014.1,804.4C2014.8,804.4 2015.5,804.4 2016.1,804.3C2016.8,804.3 2017.5,804.3 2018.2,804.3C2018.9,804.3 2019.6,804.2 2020.2,804.2C2020.9,804.2 2021.6,804.2 2022.3,804.1C2023.0,804.1 2023.7,804.1 2024.3,804.1C2025.0,804.0 2025.7,804.0 2026.4,804.0C2027.1,804.0 2027.8,804.0 2028.4,803.9C2029.1,803.9 2029.8,803.9 2030.5,803.9C2031.2,803.9 2031.9,803.8 2032.6,803.8C2033.2,803.8 2033.9,803.8 2034.6,803.8C2035.3,803.7 2036.0,803.7 2036.7,803.7C2037.3,803.7 2038.0,803.7 2038.7,803.6C2039.4,803.6 2040.1,803.6 2040.8,803.6C2041.4,803.6 2042.1,803.6 2042.8,803.5C2043.5,803.5 2044.2,803.5 2044.9,803.5C2045.6,803.5 2046.2,803.5 2046.9,803.5C2047.6,803.4 2048.3,803.4 2049.0,803.4C2049.7,803.4 2050.3,803.4 2051.0,803.4C2051.7,803.4 2052.4,803.3 2053.1,803.3C2053.8,803.3 2054.4,803.3 2055.1,803.3C2055.8,803.3 2056.5,803.3 2057.2,803.3C2057.9,803.3 2058.5,803.3 2059.2,803.3C2059.9,803.3 2060.6,803.2 2061.3,803.2C2062.0,803.2 2062.7,803.2 2063.3,803.2C2064.0,803.2 2064.7,803.2 2065.4,803.2C2066.1,803.2 2066.8,803.2 2067.4,803.2C2068.1,803.2 2068.8,803.2 2069.5,803.2C2070.2,803.2 2070.9,803.2 2071.5,803.2C2072.2,803.2 2072.9,803.2 2073.6,803.1C2074.3,803.1 2075.0,803.1 2075.7,803.0C2076.3,803.0 2077.0,802.9 2077.7,802.9C2078.4,802.8 2079.1,802.7 2079.8,802.7C2080.4,802.6 2081.1,802.5 2081.8,802.4C2082.5,802.3 2083.2,802.2 2083.9,802.1C2084.5,802.0 2085.2,801.9 2085.9,801.8C2086.6,801.7 2087.3,801.6 2088.0,801.5C2088.6,801.4 2089.3,801.3 2090.0,801.1C2090.7,801.0 2091.4,800.9 2092.1,800.7C2092.8,800.6 2093.4,800.5 2094.1,800.3C2094.8,800.2 2095.5,800.1 2096.2,799.9C2096.9,799.8 2097.5,799.6 2098.2,799.5C2098.9,799.3 2099.6,799.2 2100.3,799.1C2101.0,798.9 2101.6,798.8 2102.3,798.6C2103.0,798.5 2103.7,798.4 2104.4,798.2C2105.1,798.1 2105.8,797.9 2106.4,797.8C2107.1,797.7 2107.8,797.6 2108.5,797.4C2109.2,797.3 2109.9,797.2 2110.5,797.1C2111.2,796.9 2111.9,796.8 2112.6,796.7C2113.3,796.6 2114.0,796.5 2114.6,796.4C2115.3,796.3 2116.0,796.2 2116.7,796.1C2117.4,796.1 2118.1,796.0 2118.7,795.9C2119.4,795.8 2120.1,795.8 2120.8,795.7C2121.5,795.7 2122.2,795.6 2122.9,795.6C2123.5,795.5 2124.2,795.5 2124.9,795.5C2125.6,795.4 2126.3,795.4 2127.0,795.4C2127.6,795.4 2128.3,795.4 2129.0,795.4C2129.7,795.4 2130.4,795.3 2131.1,795.3C2131.7,795.3 2132.4,795.2 2133.1,795.1C2133.8,795.0 2134.5,794.9 2135.2,794.8C2135.9,794.7 2136.5,794.5 2137.2,794.4C2137.9,794.2 2138.6,794.1 2139.3,793.9C2140.0,793.7 2140.6,793.5 2141.3,793.3C2142.0,793.1 2142.7,792.8 2143.4,792.6C2144.1,792.3 2144.7,792.1 2145.4,791.8C2146.1,791.5 2146.8,791.3 2147.5,791.0C2148.2,790.7 2148.8,790.4 2149.5,790.1C2150.2,789.7 2150.9,789.4 2151.6,789.1C2152.3,788.8 2153.0,788.4 2153.6,788.1C2154.3,787.8 2155.0,787.4 2155.7,787.1C2156.4,786.7 2157.1,786.4 2157.7,786.0C2158.4,785.7 2159.1,785.3 2159.8,785.0C2160.5,784.7 2161.2,784.3 2161.8,784.0C2162.5,783.6 2163.2,783.3 2163.9,783.0C2164.6,782.6 2165.3,782.3 2166.0,782.0C2166.6,781.7 2167.3,781.4 2168.0,781.1C2168.7,780.8 2169.4,780.5 2170.1,780.2C2170.7,779.9 2171.4,779.7 2172.1,779.4C2172.8,779.2 2173.5,778.9 2174.2,778.7C2174.8,778.5 2175.5,778.3 2176.2,778.1C2176.9,777.9 2177.6,777.7 2178.3,777.5C2178.9,777.4 2179.6,777.2 2180.3,777.1C2181.0,776.9 2181.7,776.8 2182.4,776.7C2183.1,776.6 2183.7,776.6 2184.4,776.5C2185.1,776.5 2185.8,776.4 2186.5,776.4C2187.2,776.4 2187.8,776.4 2188.5,776.4C2189.2,776.4 2189.9,776.3 2190.6,776.3C2191.3,776.3 2191.9,776.2 2192.6,776.2C2193.3,776.1 2194.0,776.1 2194.7,776.0C2195.4,776.0 2196.1,775.9 2196.7,775.8C2197.4,775.7 2198.1,775.6 2198.8,775.5C2199.5,775.4 2200.2,775.3 2200.8,775.2C2201.5,775.0 2202.2,774.9 2202.9,774.8C2203.6,774.6 2204.3,774.5 2204.9,774.4C2205.6,774.2 2206.3,774.1 2207.0,773.9C2207.7,773.7 2208.4,773.6 2209.0,773.4C2209.7,773.2 2210.4,773.1 2211.1,772.9C2211.8,772.7 2212.5,772.5 2213.2,772.4C2213.8,772.2 2214.5,772.0 2215.2,771.8C2215.9,771.6 2216.6,771.5 2217.3,771.3C2217.9,771.1 2218.6,770.9 2219.3,770.7C2220.0,770.5 2220.7,770.4 2221.4,770.2C2222.0,770.0 2222.7,769.8 2223.4,769.7C2224.1,769.5 2224.8,769.3 2225.5,769.1C2226.2,769.0 2226.8,768.8 2227.5,768.7C2228.2,768.5 2228.9,768.4 2229.6,768.2C2230.3,768.1 2230.9,767.9 2231.6,767.8C2232.3,767.7 2233.0,767.6 2233.7,767.4C2234.4,767.3 2235.0,767.2 2235.7,767.1C2236.4,767.0 2237.1,766.9 2237.8,766.8C2238.5,766.8 2239.1,766.7 2239.8,766.6C2240.5,766.6 2241.2,766.5 2241.9,766.5C2242.6,766.4 2243.3,766.4 2243.9,766.4C2244.6,766.3 2245.3,766.3 2246.0,766.3C2246.7,766.3 2247.4,766.3 2248.0,766.3C2248.7,766.3 2249.4,766.3 2250.1,766.3C2250.8,766.3 2251.5,766.3 2252.1,766.3C2252.8,766.3 2253.5,766.2 2254.2,766.2C2254.9,766.2 2255.6,766.2 2256.3,766.2C2256.9,766.2 2257.6,766.1 2258.3,766.1C2259.0,766.1 2259.7,766.1 2260.4,766.0C2261.0,766.0 2261.7,766.0 2262.4,765.9C2263.1,765.9 2263.8,765.9 2264.5,765.8C2265.1,765.8 2265.8,765.8 2266.5,765.7C2267.2,765.7 2267.9,765.7 2268.6,765.6C2269.2,765.6 2269.9,765.6 2270.6,765.5C2271.3,765.5 2272.0,765.4 2272.7,765.4C2273.4,765.4 2274.0,765.3 2274.7,765.3C2275.4,765.2 2276.1,765.2 2276.8,765.2C2277.5,765.1 2278.1,765.1 2278.8,765.0C2279.5,765.0 2280.2,765.0 2280.9,764.9C2281.6,764.9 2282.2,764.8 2282.9,764.8C2283.6,764.8 2284.3,764.7 2285.0,764.7C2285.7,764.7 2286.4,764.6 2287.0,764.6C2287.7,764.5 2288.4,764.5 2289.1,764.5C2289.8,764.5 2290.5,764.4 2291.1,764.4C2291.8,764.4 2292.5,764.3 2293.2,764.3C2293.9,764.3 2294.6,764.3 2295.2,764.2C2295.9,764.2 2296.6,764.2 2297.3,764.2C2298.0,764.2 2298.7,764.2 2299.3,764.1C2300.0,764.1 2300.7,764.1 2301.4,764.1C2302.1,764.1 2302.8,764.1 2303.5,764.1C2304.1,764.1 2304.8,764.1 2305.5,764.1C2306.2,764.1 2306.9,764.1 2307.6,764.1C2308.2,764.1 2308.9,764.1 2309.6,764.1C2310.3,764.2 2311.0,764.2 2311.7,764.2C2312.3,764.2 2313.0,764.2 2313.7,764.3C2314.4,764.3 2315.1,764.3 2315.8,764.3C2316.5,764.4 2317.1,764.4 2317.8,764.5C2318.5,764.5 2319.2,764.5 2319.9,764.6C2320.6,764.6 2321.2,764.7 2321.9,764.7C2322.6,764.8 2323.3,764.8 2324.0,764.9C2324.7,764.9 2325.3,765.0 2326.0,765.0C2326.7,765.1 2327.4,765.1 2328.1,765.2C2328.8,765.2 2329.4,765.3 2330.1,765.4C2330.8,765.4 2331.5,765.5 2332.2,765.5C2332.9,765.6 2333.6,765.7 2334.2,765.7C2334.9,765.8 2335.6,765.8 2336.3,765.9C2337.0,766.0 2337.7,766.0 2338.3,766.1C2339.0,766.1 2339.7,766.2 2340.4,766.3C2341.1,766.3 2341.8,766.4 2342.4,766.4C2343.1,766.5 2343.8,766.5 2344.5,766.6C2345.2,766.7 2345.9,766.7 2346.6,766.8C2347.2,766.8 2347.9,766.9 2348.6,766.9C2349.3,766.9 2350.0,767.0 2350.7,767.0C2351.3,767.1 2352.0,767.1 2352.7,767.1C2353.4,767.2 2354.1,767.2 2354.8,767.2C2355.4,767.3 2356.1,767.3 2356.8,767.3C2357.5,767.3 2358.2,767.4 2358.9,767.4C2359.5,767.4 2360.2,767.4 2360.9,767.4C2361.6,767.4 2362.3,767.4 2363.0,767.4C2363.7,767.4 2364.3,767.4 2365.0,767.5C2365.7,767.5 2366.4,767.5 2367.1,767.5C2367.8,767.6 2368.4,767.6 2369.1,767.7C2369.8,767.7 2370.5,767.8 2371.2,767.9C2371.9,767.9 2372.5,768.0 2373.2,768.1C2373.9,768.2 2374.6,768.3 2375.3,768.5C2376.0,768.6 2376.7,768.7 2377.3,768.9C2378.0,769.0 2378.7,769.1 2379.4,769.3C2380.1,769.4 2380.8,769.6 2381.4,769.8C2382.1,769.9 2382.8,770.1 2383.5,770.3C2384.2,770.4 2384.9,770.6 2385.5,770.8C2386.2,771.0 2386.9,771.1 2387.6,771.3C2388.3,771.5 2389.0,771.7 2389.6,771.8C2390.3,772.0 2391.0,772.2 2391.7,772.4C2392.4,772.5 2393.1,772.7 2393.8,772.9C2394.4,773.0 2395.1,773.2 2395.8,773.4C2396.5,773.5 2397.2,773.7 2397.9,773.8C2398.5,773.9 2399.2,774.1 2399.9,774.2C2400.6,774.3 2401.3,774.4 2402.0,774.5C2402.6,774.6 2403.3,774.7 2404.0,774.8C2404.7,774.9 2405.4,775.0 2406.1,775.0C2406.8,775.1 2407.4,775.1 2408.1,775.2C2408.8,775.2 2409.5,775.2 2410.2,775.3C2410.9,775.3 2411.5,775.3 2412.2,775.3C2412.9,775.3 2413.6,775.4 2414.3,775.5C2415.0,775.5 2415.6,775.6 2416.3,775.8C2417.0,775.9 2417.7,776.1 2418.4,776.3C2419.1,776.5 2419.7,776.7 2420.4,776.9C2421.1,777.2 2421.8,777.5 2422.5,777.7C2423.2,778.0 2423.9,778.3 2424.5,778.6C2425.2,779.0 2425.9,779.3 2426.6,779.7C2427.3,780.0 2428.0,780.4 2428.6,780.7C2429.3,781.1 2430.0,781.5 2430.7,781.8C2431.4,782.2 2432.1,782.6 2432.7,783.0C2433.4,783.4 2434.1,783.7 2434.8,784.1C2435.5,784.5 2436.2,784.8 2436.9,785.2C2437.5,785.5 2438.2,785.9 2438.9,786.2C2439.6,786.5 2440.3,786.8 2441.0,787.1C2441.6,787.4 2442.3,787.7 2443.0,788.0C2443.7,788.2 2444.4,788.4 2445.1,788.6C2445.7,788.8 2446.4,789.0 2447.1,789.2C2447.8,789.3 2448.5,789.5 2449.2,789.6C2449.8,789.7 2450.5,789.7 2451.2,789.8C2451.9,789.8 2452.6,789.8 2453.3,789.8C2454.0,789.8 2454.6,789.8 2455.3,789.9C2456.0,789.9 2456.7,790.0 2457.4,790.1C2458.1,790.2 2458.7,790.3 2459.4,790.4C2460.1,790.5 2460.8,790.6 2461.5,790.7C2462.2,790.9 2462.8,791.0 2463.5,791.2C2464.2,791.3 2464.9,791.5 2465.6,791.6C2466.3,791.8 2467.0,792.0 2467.6,792.1C2468.3,792.3 2469.0,792.4 2469.7,792.6C2470.4,792.8 2471.1,792.9 2471.7,793.1C2472.4,793.2 2473.1,793.3 2473.8,793.5C2474.5,793.6 2475.2,793.7 2475.8,793.8C2476.5,793.9 2477.2,794.0 2477.9,794.1C2478.6,794.1 2479.3,794.2 2479.9,794.2C2480.6,794.2 2481.3,794.3 2482.0,794.3" stroke="#e76f51" stroke-width="3" stroke-dasharray="9 9"/>
<path d="M1893.0,671.3C1893.7,681.5 1894.4,691.7 1895.1,691.7C1895.7,691.7 1896.4,665.6 1897.1,665.6C1897.8,665.6 1898.5,698.4 1899.2,698.4C1899.8,698.4 1900.5,696.9 1901.2,695.5C1901.9,694.0 1902.6,689.9 1903.3,689.9C1903.9,689.9 1904.6,718.7 1905.3,718.7C1906.0,718.7 1906.7,700.7 1907.4,695.4C1908.0,690.1 1908.7,690.4 1909.4,687.1C1910.1,683.8 1910.8,675.5 1911.5,675.5C1912.2,675.5 1912.8,725.7 1913.5,725.7C1914.2,725.7 1914.9,710.8 1915.6,710.8C1916.3,710.8 1916.9,726.2 1917.6,726.2C1918.3,726.2 1919.0,674.9 1919.7,674.9C1920.4,674.9 1921.0,677.8 1921.7,683.4C1922.4,689.1 1923.1,730.2 1923.8,730.2C1924.5,730.2 1925.2,663.1 1925.8,663.1C1926.5,663.1 1927.2,663.6 1927.9,664.6C1928.6,665.6 1929.3,685.1 1929.9,687.0C1930.6,689.0 1931.3,688.0 1932.0,690.0C1932.7,692.0 1933.4,716.0 1934.0,723.0C1934.7,729.9 1935.4,733.4 1936.1,733.4C1936.8,733.4 1937.5,696.9 1938.1,696.9C1938.8,696.9 1939.5,730.7 1940.2,730.7C1940.9,730.7 1941.6,723.7 1942.3,721.6C1942.9,719.5 1943.6,718.1 1944.3,718.1C1945.0,718.1 1945.7,733.5 1946.4,733.5C1947.0,733.5 1947.7,702.7 1948.4,702.7C1949.1,702.7 1949.8,704.6 1950.5,704.6C1951.1,704.6 1951.8,676.1 1952.5,676.1C1953.2,676.1 1953.9,699.4 1954.6,699.4C1955.3,699.4 1955.9,691.0 1956.6,691.0C1957.3,691.0 1958.0,701.3 1958.7,701.3C1959.4,701.3 1960.0,689.9 1960.7,689.9C1961.4,689.9 1962.1,700.1 1962.8,704.8C1963.5,709.4 1964.1,717.8 1964.8,717.8C1965.5,717.8 1966.2,666.5 1966.9,666.5C1967.6,666.5 1968.2,666.6 1968.9,666.8C1969.6,667.1 1970.3,674.7 1971.0,678.1C1971.7,681.6 1972.4,681.5 1973.0,687.8C1973.7,694.1 1974.4,711.8 1975.1,716.0C1975.8,720.2 1976.5,722.3 1977.1,722.3C1977.8,722.3 1978.5,718.2 1979.2,718.2C1979.9,718.2 1980.6,734.0 1981.2,734.0C1981.9,734.0 1982.6,684.3 1983.3,684.3C1984.0,684.3 1984.7,710.6 1985.4,710.6C1986.0,710.6 1986.7,678.7 1987.4,678.7C1988.1,678.7 1988.8,711.7 1989.5,711.7C1990.1,711.7 1990.8,670.9 1991.5,670.9C1992.2,670.9 1992.9,673.5 1993.6,678.9C1994.2,684.2 1994.9,739.4 1995.6,739.4C1996.3,739.4 1997.0,734.5 1997.7,724.5C1998.3,714.5 1999.0,674.4 1999.7,674.4C2000.4,674.4 2001.1,705.8 2001.8,705.8C2002.5,705.8 2003.1,669.2 2003.8,669.2C2004.5,669.2 2005.2,700.0 2005.9,710.7C2006.6,721.5 2007.2,733.7 2007.9,733.7C2008.6,733.7 2009.3,701.0 2010.0,693.6C2010.7,686.3 2011.3,682.6 2012.0,682.6C2012.7,682.6 2013.4,710.5 2014.1,718.6C2014.8,726.7 2015.5,731.3 2016.1,731.3C2016.8,731.3 2017.5,723.9 2018.2,713.2C2018.9,702.6 2019.6,667.6 2020.2,667.6C2020.9,667.6 2021.6,672.3 2022.3,681.7C2023.0,691.2 2023.7,726.9 2024.3,726.9C2025.0,726.9 2025.7,717.1 2026.4,717.1C2027.1,717.1 2027.8,725.4 2028.4,726.9C2029.1,728.4 2029.8,729.2 2030.5,729.2C2031.2,729.2 2031.9,675.8 2032.6,675.8C2033.2,675.8 2033.9,719.5 2034.6,719.5C2035.3,719.5 2036.0,691.5 2036.7,691.5C2037.3,691.5 2038.0,694.7 2038.7,698.8C2039.4,703.0 2040.1,716.6 2040.8,716.6C2041.4,716.6 2042.1,677.2 2042.8,677.2C2043.5,677.2 2044.2,719.6 2044.9,719.6C2045.6,719.6 2046.2,682.4 2046.9,682.4C2047.6,682.4 2048.3,719.5 2049.0,719.5C2049.7,719.5 2050.3,697.2 2051.0,697.2C2051.7,697.2 2052.4,711.7 2053.1,711.7C2053.8,711.7 2054.4,710.2 2055.1,707.2C2055.8,704.2 2056.5,656.6 2057.2,656.6C2057.9,656.6 2058.5,660.5 2059.2,668.3C2059.9,676.1 2060.6,703.7 2061.3,703.7C2062.0,703.7 2062.7,662.0 2063.3,662.0C2064.0,662.0 2064.7,710.0 2065.4,710.0C2066.1,710.0 2066.8,704.5 2067.4,696.8C2068.1,689.1 2068.8,663.9 2069.5,663.9C2070.2,663.9 2070.9,670.1 2071.5,679.0C2072.2,688.0 2072.9,717.6 2073.6,717.6C2074.3,717.6 2075.0,653.8 2075.7,653.8C2076.3,653.8 2077.0,708.9 2077.7,708.9C2078.4,708.9 2079.1,707.7 2079.8,705.2C2080.4,702.8 2081.1,667.9 2081.8,667.9C2082.5,667.9 2083.2,697.9 2083.9,699.0C2084.5,700.0 2085.2,699.5 2085.9,700.5C2086.6,701.6 2087.3,715.6 2088.0,715.6C2088.6,715.6 2089.3,714.9 2090.0,713.5C2090.7,712.1 2091.4,677.3 2092.1,677.3C2092.8,677.3 2093.4,700.5 2094.1,700.5C2094.8,700.5 2095.5,673.7 2096.2,673.7C2096.9,673.7 2097.5,688.9 2098.2,688.9C2098.9,688.9 2099.6,686.5 2100.3,681.8C2101.0,677.1 2101.6,644.3 2102.3,644.3C2103.0,644.3 2103.7,676.9 2104.4,676.9C2105.1,676.9 2105.8,674.1 2106.4,669.0C2107.1,664.0 2107.8,646.7 2108.5,646.7C2109.2,646.7 2109.9,693.8 2110.5,694.2C2111.2,694.6 2111.9,694.8 2112.6,694.8C2113.3,694.8 2114.0,639.3 2114.6,639.3C2115.3,639.3 2116.0,641.0 2116.7,644.4C2117.4,647.7 2118.1,681.7 2118.7,683.6C2119.4,685.4 2120.1,686.4 2120.8,686.4C2121.5,686.4 2122.2,655.1 2122.9,645.7C2123.5,636.3 2124.2,629.9 2124.9,629.9C2125.6,629.9 2126.3,681.8 2127.0,681.8C2127.6,681.8 2128.3,626.6 2129.0,626.6C2129.7,626.6 2130.4,627.8 2131.1,630.2C2131.7,632.6 2132.4,643.9 2133.1,649.0C2133.8,654.1 2134.5,655.3 2135.2,660.9C2135.9,666.5 2136.5,680.1 2137.2,682.6C2137.9,685.1 2138.6,686.3 2139.3,686.3C2140.0,686.3 2140.6,619.4 2141.3,619.4C2142.0,619.4 2142.7,670.4 2143.4,670.4C2144.1,670.4 2144.7,636.4 2145.4,636.4C2146.1,636.4 2146.8,667.8 2147.5,667.8C2148.2,667.8 2148.8,626.8 2149.5,626.8C2150.2,626.8 2150.9,636.4 2151.6,642.6C2152.3,648.8 2153.0,659.1 2153.6,664.0C2154.3,669.0 2155.0,672.3 2155.7,672.3C2156.4,672.3 2157.1,633.2 2157.7,633.2C2158.4,633.2 2159.1,679.8 2159.8,679.8C2160.5,679.8 2161.2,674.2 2161.8,668.3C2162.5,662.4 2163.2,652.0 2163.9,644.5C2164.6,636.9 2165.3,623.3 2166.0,623.3C2166.6,623.3 2167.3,633.3 2168.0,640.0C2168.7,646.7 2169.4,663.5 2170.1,663.5C2170.7,663.5 2171.4,617.5 2172.1,617.5C2172.8,617.5 2173.5,659.5 2174.2,668.0C2174.8,676.6 2175.5,680.9 2176.2,680.9C2176.9,680.9 2177.6,667.5 2178.3,662.2C2178.9,656.8 2179.6,648.9 2180.3,648.9C2181.0,648.9 2181.7,675.7 2182.4,675.7C2183.1,675.7 2183.7,670.6 2184.4,666.7C2185.1,662.7 2185.8,657.1 2186.5,652.1C2187.2,647.1 2187.8,636.7 2188.5,636.7C2189.2,636.7 2189.9,667.3 2190.6,667.3C2191.3,667.3 2191.9,659.3 2192.6,649.9C2193.3,640.6 2194.0,616.1 2194.7,611.2C2195.4,606.3 2196.1,603.8 2196.7,603.8C2197.4,603.8 2198.1,626.0 2198.8,626.0C2199.5,626.0 2200.2,622.6 2200.8,622.6C2201.5,622.6 2202.2,624.8 2202.9,629.2C2203.6,633.7 2204.3,655.6 2204.9,660.0C2205.6,664.4 2206.3,666.4 2207.0,666.6C2207.7,666.7 2208.4,666.8 2209.0,666.8C2209.7,666.8 2210.4,602.1 2211.1,602.1C2211.8,602.1 2212.5,616.1 2213.2,616.1C2213.8,616.1 2214.5,596.5 2215.2,596.5C2215.9,596.5 2216.6,663.0 2217.3,663.0C2217.9,663.0 2218.6,618.2 2219.3,618.2C2220.0,618.2 2220.7,628.4 2221.4,628.4C2222.0,628.4 2222.7,609.9 2223.4,609.9C2224.1,609.9 2224.8,638.7 2225.5,638.7C2226.2,638.7 2226.8,589.4 2227.5,589.4C2228.2,589.4 2228.9,654.9 2229.6,654.9C2230.3,654.9 2230.9,628.7 2231.6,620.7C2232.3,612.6 2233.0,610.9 2233.7,606.6C2234.4,602.2 2235.0,594.5 2235.7,594.5C2236.4,594.5 2237.1,604.4 2237.8,605.8C2238.5,607.3 2239.1,608.0 2239.8,608.0C2240.5,608.0 2241.2,603.9 2241.9,601.4C2242.6,598.8 2243.3,592.5 2243.9,592.5C2244.6,592.5 2245.3,632.8 2246.0,632.8C2246.7,632.8 2247.4,615.5 2248.0,608.9C2248.7,602.4 2249.4,593.5 2250.1,593.5C2250.8,593.5 2251.5,594.3 2252.1,595.7C2252.8,597.2 2253.5,628.3 2254.2,628.3C2254.9,628.3 2255.6,605.1 2256.3,601.7C2256.9,598.3 2257.6,596.6 2258.3,596.6C2259.0,596.6 2259.7,617.6 2260.4,617.6C2261.0,617.6 2261.7,614.0 2262.4,614.0C2263.1,614.0 2263.8,631.6 2264.5,631.6C2265.1,631.6 2265.8,618.6 2266.5,617.5C2267.2,616.4 2267.9,615.9 2268.6,615.9C2269.2,615.9 2269.9,654.0 2270.6,654.0C2271.3,654.0 2272.0,625.0 2272.7,614.2C2273.4,603.4 2274.0,589.2 2274.7,589.2C2275.4,589.2 2276.1,594.4 2276.8,597.6C2277.5,600.9 2278.1,602.8 2278.8,608.8C2279.5,614.7 2280.2,633.4 2280.9,633.4C2281.6,633.4 2282.2,608.9 2282.9,608.9C2283.6,608.9 2284.3,616.6 2285.0,620.2C2285.7,623.8 2286.4,630.6 2287.0,630.6C2287.7,630.6 2288.4,602.4 2289.1,602.4C2289.8,602.4 2290.5,656.7 2291.1,656.7C2291.8,656.7 2292.5,609.3 2293.2,609.3C2293.9,609.3 2294.6,661.0 2295.2,661.0C2295.9,661.0 2296.6,620.4 2297.3,620.4C2298.0,620.4 2298.7,624.8 2299.3,629.2C2300.0,633.7 2300.7,647.4 2301.4,647.4C2302.1,647.4 2302.8,614.1 2303.5,614.1C2304.1,614.1 2304.8,628.6 2305.5,628.6C2306.2,628.6 2306.9,625.4 2307.6,620.4C2308.2,615.4 2308.9,598.6 2309.6,598.6C2310.3,598.6 2311.0,635.4 2311.7,646.2C2312.3,657.1 2313.0,663.8 2313.7,663.8C2314.4,663.8 2315.1,651.0 2315.8,643.1C2316.5,635.2 2317.1,616.1 2317.8,616.1C2318.5,616.1 2319.2,648.5 2319.9,650.2C2320.6,651.9 2321.2,652.7 2321.9,652.7C2322.6,652.7 2323.3,600.3 2324.0,600.3C2324.7,600.3 2325.3,612.6 2326.0,618.2C2326.7,623.8 2327.4,634.2 2328.1,634.2C2328.8,634.2 2329.4,602.5 2330.1,602.5C2330.8,602.5 2331.5,643.4 2332.2,643.4C2332.9,643.4 2333.6,619.8 2334.2,619.8C2334.9,619.8 2335.6,653.9 2336.3,653.9C2337.0,653.9 2337.7,645.0 2338.3,638.0C2339.0,631.0 2339.7,616.5 2340.4,611.9C2341.1,607.3 2341.8,605.0 2342.4,605.0C2343.1,605.0 2343.8,606.1 2344.5,608.4C2345.2,610.6 2345.9,644.7 2346.6,644.7C2347.2,644.7 2347.9,631.5 2348.6,631.5C2349.3,631.5 2350.0,645.9 2350.7,651.6C2351.3,657.2 2352.0,665.5 2352.7,665.5C2353.4,665.5 2354.1,648.7 2354.8,640.7C2355.4,632.7 2356.1,617.4 2356.8,617.4C2357.5,617.4 2358.2,617.5 2358.9,617.6C2359.5,617.8 2360.2,628.5 2360.9,628.5C2361.6,628.5 2362.3,612.5 2363.0,612.5C2363.7,612.5 2364.3,655.8 2365.0,661.6C2365.7,667.4 2366.4,670.3 2367.1,670.3C2367.8,670.3 2368.4,651.2 2369.1,651.2C2369.8,651.2 2370.5,661.6 2371.2,664.7C2371.9,667.8 2372.5,670.0 2373.2,670.0C2373.9,670.0 2374.6,661.1 2375.3,656.5C2376.0,651.9 2376.7,642.2 2377.3,642.2C2378.0,642.2 2378.7,648.4 2379.4,652.4C2380.1,656.3 2380.8,665.8 2381.4,665.8C2382.1,665.8 2382.8,635.4 2383.5,629.0C2384.2,622.6 2384.9,619.4 2385.5,619.4C2386.2,619.4 2386.9,646.8 2387.6,657.7C2388.3,668.7 2389.0,682.9 2389.6,685.2C2390.3,687.5 2391.0,688.6 2391.7,688.6C2392.4,688.6 2393.1,628.7 2393.8,628.7C2394.4,628.7 2395.1,688.4 2395.8,688.4C2396.5,688.4 2397.2,640.7 2397.9,640.7C2398.5,640.7 2399.2,645.9 2399.9,650.6C2400.6,655.4 2401.3,669.4 2402.0,669.4C2402.6,669.4 2403.3,635.2 2404.0,635.2C2404.7,635.2 2405.4,690.8 2406.1,690.8C2406.8,690.8 2407.4,687.9 2408.1,682.9C2408.8,677.9 2409.5,660.7 2410.2,660.7C2410.9,660.7 2411.5,692.2 2412.2,692.2C2412.9,692.2 2413.6,635.5 2414.3,635.5C2415.0,635.5 2415.6,673.6 2416.3,678.9C2417.0,684.2 2417.7,684.2 2418.4,686.9C2419.1,689.5 2419.7,694.8 2420.4,694.8C2421.1,694.8 2421.8,654.5 2422.5,654.5C2423.2,654.5 2423.9,668.9 2424.5,668.9C2425.2,668.9 2425.9,657.4 2426.6,657.3C2427.3,657.1 2428.0,657.2 2428.6,657.0C2429.3,656.8 2430.0,650.8 2430.7,647.7C2431.4,644.6 2432.1,638.5 2432.7,638.5C2433.4,638.5 2434.1,650.2 2434.8,659.8C2435.5,669.4 2436.2,696.2 2436.9,696.2C2437.5,696.2 2438.2,678.2 2438.9,678.2C2439.6,678.2 2440.3,695.1 2441.0,701.2C2441.6,707.3 2442.3,714.9 2443.0,714.9C2443.7,714.9 2444.4,691.5 2445.1,683.7C2445.7,675.9 2446.4,668.1 2447.1,668.1C2447.8,668.1 2448.5,708.0 2449.2,708.0C2449.8,708.0 2450.5,704.4 2451.2,703.0C2451.9,701.5 2452.6,701.8 2453.3,699.3C2454.0,696.9 2454.6,675.7 2455.3,675.7C2456.0,675.7 2456.7,689.8 2457.4,689.8C2458.1,689.8 2458.7,686.8 2459.4,684.4C2460.1,682.1 2460.8,675.6 2461.5,675.6C2462.2,675.6 2462.8,702.7 2463.5,702.7C2464.2,702.7 2464.9,680.1 2465.6,675.3C2466.3,670.5 2467.0,668.1 2467.6,668.1C2468.3,668.1 2469.0,727.5 2469.7,727.5C2470.4,727.5 2471.1,667.8 2471.7,667.8C2472.4,667.8 2473.1,673.7 2473.8,683.4C2474.5,693.2 2475.2,726.3 2475.8,726.3C2476.5,726.3 2477.2,709.3 2477.9,703.4C2478.6,697.6 2479.3,696.7 2479.9,691.3C2480.6,686.0 2481.3,678.5 2482.0,671.1" stroke="#e9c46a" stroke-width="3.1"/>
<path d="M1893.0,798.7C1893.7,776.4 1894.4,754.0 1895.1,754.0C1895.7,754.0 1896.4,761.6 1897.1,772.8C1897.8,784.1 1898.5,821.6 1899.2,821.6C1899.8,821.6 1900.5,790.9 1901.2,790.9C1901.9,790.9 1902.6,801.1 1903.3,801.1C1903.9,801.1 1904.6,794.7 1905.3,794.7C1906.0,794.7 1906.7,818.8 1907.4,818.8C1908.0,818.8 1908.7,817.5 1909.4,815.0C1910.1,812.5 1910.8,799.8 1911.5,799.8C1912.2,799.8 1912.8,813.3 1913.5,813.3C1914.2,813.3 1914.9,799.1 1915.6,799.1C1916.3,799.1 1916.9,825.1 1917.6,825.1C1918.3,825.1 1919.0,823.8 1919.7,821.4C1920.4,818.9 1921.0,783.7 1921.7,783.7C1922.4,783.7 1923.1,801.1 1923.8,801.1C1924.5,801.1 1925.2,798.7 1925.8,795.5C1926.5,792.4 1927.2,782.1 1927.9,782.1C1928.6,782.1 1929.3,798.0 1929.9,804.8C1930.6,811.5 1931.3,822.9 1932.0,822.9C1932.7,822.9 1933.4,779.1 1934.0,779.1C1934.7,779.1 1935.4,790.8 1936.1,790.8C1936.8,790.8 1937.5,786.6 1938.1,786.6C1938.8,786.6 1939.5,788.8 1940.2,788.8C1940.9,788.8 1941.6,767.6 1942.3,767.6C1942.9,767.6 1943.6,804.3 1944.3,804.3C1945.0,804.3 1945.7,780.3 1946.4,780.3C1947.0,780.3 1947.7,803.9 1948.4,803.9C1949.1,803.9 1949.8,794.5 1950.5,791.5C1951.1,788.6 1951.8,786.2 1952.5,786.2C1953.2,786.2 1953.9,801.2 1954.6,807.0C1955.3,812.8 1955.9,820.8 1956.6,820.8C1957.3,820.8 1958.0,803.7 1958.7,797.3C1959.4,790.9 1960.0,782.5 1960.7,782.5C1961.4,782.5 1962.1,787.5 1962.8,790.2C1963.5,792.9 1964.1,798.8 1964.8,798.8C1965.5,798.8 1966.2,787.0 1966.9,787.0C1967.6,787.0 1968.2,814.6 1968.9,814.7C1969.6,814.8 1970.3,814.8 1971.0,814.8C1971.7,814.8 1972.4,811.9 1973.0,806.1C1973.7,800.2 1974.4,776.3 1975.1,776.3C1975.8,776.3 1976.5,810.4 1977.1,813.7C1977.8,816.9 1978.5,817.9 1979.2,818.5C1979.9,819.1 1980.6,818.8 1981.2,819.4C1981.9,820.0 1982.6,823.0 1983.3,823.0C1984.0,823.0 1984.7,814.0 1985.4,808.6C1986.0,803.3 1986.7,796.1 1987.4,790.7C1988.1,785.2 1988.8,775.6 1989.5,775.6C1990.1,775.6 1990.8,805.2 1991.5,805.2C1992.2,805.2 1992.9,802.8 1993.6,802.8C1994.2,802.8 1994.9,807.6 1995.6,807.6C1996.3,807.6 1997.0,807.3 1997.7,806.6C1998.3,805.9 1999.0,778.0 1999.7,778.0C2000.4,778.0 2001.1,786.5 2001.8,791.7C2002.5,796.9 2003.1,804.8 2003.8,809.2C2004.5,813.6 2005.2,818.3 2005.9,818.3C2006.6,818.3 2007.2,777.4 2007.9,777.4C2008.6,777.4 2009.3,782.0 2010.0,782.0C2010.7,782.0 2011.3,774.6 2012.0,774.6C2012.7,774.6 2013.4,810.2 2014.1,810.2C2014.8,810.2 2015.5,798.4 2016.1,791.6C2016.8,784.7 2017.5,769.0 2018.2,769.0C2018.9,769.0 2019.6,788.6 2020.2,788.6C2020.9,788.6 2021.6,767.3 2022.3,767.3C2023.0,767.3 2023.7,814.2 2024.3,814.2C2025.0,814.2 2025.7,765.4 2026.4,765.4C2027.1,765.4 2027.8,820.8 2028.4,820.8C2029.1,820.8 2029.8,799.0 2030.5,799.0C2031.2,799.0 2031.9,822.7 2032.6,822.7C2033.2,822.7 2033.9,775.2 2034.6,775.2C2035.3,775.2 2036.0,782.6 2036.7,782.6C2037.3,782.6 2038.0,765.2 2038.7,765.2C2039.4,765.2 2040.1,775.4 2040.8,775.4C2041.4,775.4 2042.1,766.6 2042.8,766.6C2043.5,766.6 2044.2,791.4 2044.9,791.4C2045.6,791.4 2046.2,764.2 2046.9,764.2C2047.6,764.2 2048.3,772.1 2049.0,778.6C2049.7,785.0 2050.3,802.9 2051.0,802.9C2051.7,802.9 2052.4,764.9 2053.1,764.9C2053.8,764.9 2054.4,793.6 2055.1,800.9C2055.8,808.3 2056.5,809.0 2057.2,812.0C2057.9,815.0 2058.5,819.0 2059.2,819.0C2059.9,819.0 2060.6,795.5 2061.3,795.5C2062.0,795.5 2062.7,811.7 2063.3,811.7C2064.0,811.7 2064.7,767.9 2065.4,767.2C2066.1,766.5 2066.8,766.2 2067.4,766.2C2068.1,766.2 2068.8,805.9 2069.5,810.5C2070.2,815.0 2070.9,817.2 2071.5,817.2C2072.2,817.2 2072.9,791.5 2073.6,791.5C2074.3,791.5 2075.0,813.2 2075.7,813.2C2076.3,813.2 2077.0,797.1 2077.7,790.6C2078.4,784.1 2079.1,774.3 2079.8,774.3C2080.4,774.3 2081.1,808.1 2081.8,808.1C2082.5,808.1 2083.2,804.4 2083.9,797.9C2084.5,791.4 2085.2,769.0 2085.9,769.0C2086.6,769.0 2087.3,792.4 2088.0,796.5C2088.6,800.6 2089.3,802.7 2090.0,802.7C2090.7,802.7 2091.4,769.5 2092.1,769.5C2092.8,769.5 2093.4,774.2 2094.1,774.2C2094.8,774.2 2095.5,769.3 2096.2,769.3C2096.9,769.3 2097.5,777.0 2098.2,781.8C2098.9,786.7 2099.6,798.4 2100.3,798.4C2101.0,798.4 2101.6,785.6 2102.3,781.4C2103.0,777.2 2103.7,773.0 2104.4,773.0C2105.1,773.0 2105.8,778.4 2106.4,784.3C2107.1,790.1 2107.8,808.2 2108.5,808.2C2109.2,808.2 2109.9,806.3 2110.5,804.4C2111.2,802.6 2111.9,802.0 2112.6,797.1C2113.3,792.2 2114.0,774.8 2114.6,774.8C2115.3,774.8 2116.0,787.2 2116.7,787.2C2117.4,787.2 2118.1,787.1 2118.7,787.0C2119.4,786.9 2120.1,769.7 2120.8,769.7C2121.5,769.7 2122.2,812.3 2122.9,812.3C2123.5,812.3 2124.2,780.0 2124.9,780.0C2125.6,780.0 2126.3,797.2 2127.0,797.2C2127.6,797.2 2128.3,788.0 2129.0,782.7C2129.7,777.3 2130.4,765.2 2131.1,765.2C2131.7,765.2 2132.4,799.7 2133.1,799.7C2133.8,799.7 2134.5,756.3 2135.2,756.3C2135.9,756.3 2136.5,808.1 2137.2,808.1C2137.9,808.1 2138.6,777.9 2139.3,777.9C2140.0,777.9 2140.6,778.0 2141.3,778.2C2142.0,778.3 2142.7,795.7 2143.4,795.7C2144.1,795.7 2144.7,775.1 2145.4,775.1C2146.1,775.1 2146.8,779.3 2147.5,779.5C2148.2,779.7 2148.8,779.8 2149.5,779.8C2150.2,779.8 2150.9,762.7 2151.6,762.7C2152.3,762.7 2153.0,804.9 2153.6,804.9C2154.3,804.9 2155.0,789.6 2155.7,781.4C2156.4,773.3 2157.1,755.9 2157.7,755.9C2158.4,755.9 2159.1,793.9 2159.8,793.9C2160.5,793.9 2161.2,749.4 2161.8,749.4C2162.5,749.4 2163.2,788.7 2163.9,788.7C2164.6,788.7 2165.3,759.1 2166.0,759.1C2166.6,759.1 2167.3,789.1 2168.0,789.1C2168.7,789.1 2169.4,771.9 2170.1,771.9C2170.7,771.9 2171.4,772.2 2172.1,773.0C2172.8,773.7 2173.5,793.0 2174.2,793.0C2174.8,793.0 2175.5,755.3 2176.2,755.3C2176.9,755.3 2177.6,768.2 2178.3,768.2C2178.9,768.2 2179.6,755.4 2180.3,755.4C2181.0,755.4 2181.7,764.2 2182.4,764.2C2183.1,764.2 2183.7,763.0 2184.4,763.0C2185.1,763.0 2185.8,763.6 2186.5,764.8C2187.2,765.9 2187.8,778.5 2188.5,778.5C2189.2,778.5 2189.9,742.2 2190.6,742.2C2191.3,742.2 2191.9,791.1 2192.6,791.1C2193.3,791.1 2194.0,743.1 2194.7,743.1C2195.4,743.1 2196.1,743.3 2196.7,743.7C2197.4,744.0 2198.1,765.4 2198.8,765.4C2199.5,765.4 2200.2,748.1 2200.8,748.1C2201.5,748.1 2202.2,752.3 2202.9,753.9C2203.6,755.4 2204.3,755.0 2204.9,757.4C2205.6,759.8 2206.3,775.7 2207.0,775.7C2207.7,775.7 2208.4,774.2 2209.0,773.4C2209.7,772.6 2210.4,770.9 2211.1,770.9C2211.8,770.9 2212.5,773.1 2213.2,773.1C2213.8,773.1 2214.5,732.6 2215.2,732.6C2215.9,732.6 2216.6,769.2 2217.3,769.2C2217.9,769.2 2218.6,766.6 2219.3,765.6C2220.0,764.5 2220.7,764.7 2221.4,762.8C2222.0,761.0 2222.7,738.1 2223.4,738.1C2224.1,738.1 2224.8,757.7 2225.5,757.7C2226.2,757.7 2226.8,752.3 2227.5,752.3C2228.2,752.3 2228.9,769.5 2229.6,769.5C2230.3,769.5 2230.9,767.4 2231.6,767.4C2232.3,767.4 2233.0,778.0 2233.7,778.0C2234.4,778.0 2235.0,771.6 2235.7,769.6C2236.4,767.6 2237.1,768.4 2237.8,766.1C2238.5,763.8 2239.1,730.0 2239.8,730.0C2240.5,730.0 2241.2,743.3 2241.9,750.5C2242.6,757.8 2243.3,773.7 2243.9,773.7C2244.6,773.7 2245.3,752.0 2246.0,752.0C2246.7,752.0 2247.4,772.2 2248.0,772.2C2248.7,772.2 2249.4,745.0 2250.1,745.0C2250.8,745.0 2251.5,752.3 2252.1,752.3C2252.8,752.3 2253.5,727.0 2254.2,727.0C2254.9,727.0 2255.6,763.0 2256.3,763.0C2256.9,763.0 2257.6,727.3 2258.3,727.3C2259.0,727.3 2259.7,763.7 2260.4,763.7C2261.0,763.7 2261.7,719.4 2262.4,719.4C2263.1,719.4 2263.8,731.0 2264.5,740.4C2265.1,749.9 2265.8,776.2 2266.5,776.2C2267.2,776.2 2267.9,730.2 2268.6,730.2C2269.2,730.2 2269.9,762.3 2270.6,762.3C2271.3,762.3 2272.0,757.2 2272.7,757.2C2273.4,757.2 2274.0,770.4 2274.7,770.4C2275.4,770.4 2276.1,728.8 2276.8,728.8C2277.5,728.8 2278.1,774.1 2278.8,774.1C2279.5,774.1 2280.2,735.2 2280.9,735.2C2281.6,735.2 2282.2,756.0 2282.9,756.0C2283.6,756.0 2284.3,739.1 2285.0,739.1C2285.7,739.1 2286.4,756.5 2287.0,762.6C2287.7,768.7 2288.4,775.7 2289.1,775.7C2289.8,775.7 2290.5,725.4 2291.1,725.4C2291.8,725.4 2292.5,733.7 2293.2,741.3C2293.9,748.8 2294.6,770.7 2295.2,770.7C2295.9,770.7 2296.6,722.2 2297.3,722.2C2298.0,722.2 2298.7,723.6 2299.3,726.3C2300.0,728.9 2300.7,763.7 2301.4,770.4C2302.1,777.1 2302.8,780.4 2303.5,780.4C2304.1,780.4 2304.8,744.8 2305.5,744.8C2306.2,744.8 2306.9,773.4 2307.6,773.4C2308.2,773.4 2308.9,737.7 2309.6,737.7C2310.3,737.7 2311.0,753.6 2311.7,753.6C2312.3,753.6 2313.0,739.2 2313.7,739.2C2314.4,739.2 2315.1,747.6 2315.8,747.6C2316.5,747.6 2317.1,737.5 2317.8,735.5C2318.5,733.4 2319.2,732.4 2319.9,732.4C2320.6,732.4 2321.2,745.2 2321.9,745.7C2322.6,746.3 2323.3,746.0 2324.0,746.5C2324.7,747.1 2325.3,758.0 2326.0,762.7C2326.7,767.4 2327.4,772.7 2328.1,774.5C2328.8,776.4 2329.4,777.3 2330.1,777.3C2330.8,777.3 2331.5,731.5 2332.2,731.5C2332.9,731.5 2333.6,771.1 2334.2,771.1C2334.9,771.1 2335.6,758.2 2336.3,758.2C2337.0,758.2 2337.7,765.3 2338.3,765.3C2339.0,765.3 2339.7,747.5 2340.4,747.5C2341.1,747.5 2341.8,753.2 2342.4,753.2C2343.1,753.2 2343.8,734.1 2344.5,734.1C2345.2,734.1 2345.9,756.8 2346.6,760.1C2347.2,763.5 2347.9,765.2 2348.6,765.2C2349.3,765.2 2350.0,751.7 2350.7,748.3C2351.3,745.0 2352.0,745.9 2352.7,743.3C2353.4,740.8 2354.1,733.1 2354.8,733.1C2355.4,733.1 2356.1,770.8 2356.8,770.8C2357.5,770.8 2358.2,740.1 2358.9,736.8C2359.5,733.4 2360.2,731.7 2360.9,731.7C2361.6,731.7 2362.3,731.9 2363.0,732.3C2363.7,732.8 2364.3,784.5 2365.0,784.5C2365.7,784.5 2366.4,776.3 2367.1,770.1C2367.8,763.8 2368.4,748.8 2369.1,747.0C2369.8,745.1 2370.5,744.2 2371.2,744.2C2371.9,744.2 2372.5,792.6 2373.2,792.6C2373.9,792.6 2374.6,778.5 2375.3,771.8C2376.0,765.1 2376.7,753.6 2377.3,752.6C2378.0,751.6 2378.7,751.1 2379.4,751.1C2380.1,751.1 2380.8,759.5 2381.4,765.2C2382.1,770.9 2382.8,785.4 2383.5,785.4C2384.2,785.4 2384.9,774.0 2385.5,774.0C2386.2,774.0 2386.9,795.6 2387.6,795.6C2388.3,795.6 2389.0,784.1 2389.6,780.5C2390.3,777.0 2391.0,778.4 2391.7,774.2C2392.4,770.0 2393.1,750.8 2393.8,750.8C2394.4,750.8 2395.1,761.0 2395.8,765.2C2396.5,769.4 2397.2,772.5 2397.9,776.1C2398.5,779.6 2399.2,786.5 2399.9,786.5C2400.6,786.5 2401.3,785.2 2402.0,782.6C2402.6,779.9 2403.3,761.3 2404.0,761.3C2404.7,761.3 2405.4,770.0 2406.1,775.1C2406.8,780.1 2407.4,791.6 2408.1,791.6C2408.8,791.6 2409.5,752.5 2410.2,752.5C2410.9,752.5 2411.5,767.4 2412.2,767.4C2412.9,767.4 2413.6,743.7 2414.3,743.7C2415.0,743.7 2415.6,769.8 2416.3,769.8C2417.0,769.8 2417.7,764.7 2418.4,764.7C2419.1,764.7 2419.7,776.7 2420.4,776.7C2421.1,776.7 2421.8,770.9 2422.5,766.0C2423.2,761.1 2423.9,749.8 2424.5,747.5C2425.2,745.2 2425.9,744.0 2426.6,744.0C2427.3,744.0 2428.0,758.0 2428.6,763.6C2429.3,769.3 2430.0,771.7 2430.7,777.9C2431.4,784.0 2432.1,800.4 2432.7,800.4C2433.4,800.4 2434.1,753.9 2434.8,753.9C2435.5,753.9 2436.2,780.7 2436.9,781.4C2437.5,782.0 2438.2,781.7 2438.9,782.3C2439.6,783.0 2440.3,801.2 2441.0,802.4C2441.6,803.6 2442.3,804.2 2443.0,804.2C2443.7,804.2 2444.4,792.5 2445.1,783.2C2445.7,773.9 2446.4,748.4 2447.1,748.4C2447.8,748.4 2448.5,761.4 2449.2,763.0C2449.8,764.6 2450.5,764.5 2451.2,765.4C2451.9,766.2 2452.6,766.3 2453.3,768.2C2454.0,770.2 2454.6,788.1 2455.3,792.5C2456.0,797.0 2456.7,799.2 2457.4,799.2C2458.1,799.2 2458.7,773.5 2459.4,773.5C2460.1,773.5 2460.8,806.4 2461.5,806.4C2462.2,806.4 2462.8,775.1 2463.5,775.1C2464.2,775.1 2464.9,779.8 2465.6,779.8C2466.3,779.8 2467.0,778.4 2467.6,778.4C2468.3,778.4 2469.0,801.8 2469.7,804.1C2470.4,806.4 2471.1,807.6 2471.7,807.6C2472.4,807.6 2473.1,783.3 2473.8,783.3C2474.5,783.3 2475.2,803.2 2475.8,803.2C2476.5,803.2 2477.2,773.4 2477.9,773.4C2478.6,773.4 2479.3,793.4 2479.9,793.4C2480.6,793.4 2481.3,775.4 2482.0,757.4" stroke="#264653" stroke-width="3.3"/>
<path d="M1893.0,846.4C1893.7,861.5 1894.4,876.7 1895.1,876.7C1895.7,876.7 1896.4,856.1 1897.1,849.7C1897.8,843.2 1898.5,838.1 1899.2,838.1C1899.8,838.1 1900.5,838.3 1901.2,838.5C1901.9,838.8 1902.6,854.9 1903.3,854.9C1903.9,854.9 1904.6,849.0 1905.3,849.0C1906.0,849.0 1906.7,862.4 1907.4,862.4C1908.0,862.4 1908.7,854.2 1909.4,854.2C1910.1,854.2 1910.8,875.8 1911.5,875.8C1912.2,875.8 1912.8,846.2 1913.5,846.2C1914.2,846.2 1914.9,847.6 1915.6,850.4C1916.3,853.2 1916.9,866.8 1917.6,866.8C1918.3,866.8 1919.0,865.1 1919.7,861.8C1920.4,858.5 1921.0,843.4 1921.7,843.4C1922.4,843.4 1923.1,858.4 1923.8,858.4C1924.5,858.4 1925.2,832.2 1925.8,831.8C1926.5,831.4 1927.2,831.2 1927.9,831.2C1928.6,831.2 1929.3,833.5 1929.9,838.0C1930.6,842.5 1931.3,875.8 1932.0,876.4C1932.7,876.9 1933.4,877.1 1934.0,877.1C1934.7,877.1 1935.4,868.6 1936.1,866.1C1936.8,863.7 1937.5,864.9 1938.1,862.4C1938.8,859.8 1939.5,848.6 1940.2,844.6C1940.9,840.6 1941.6,838.3 1942.3,838.3C1942.9,838.3 1943.6,851.9 1944.3,851.9C1945.0,851.9 1945.7,847.9 1946.4,847.9C1947.0,847.9 1947.7,849.0 1948.4,851.2C1949.1,853.5 1949.8,878.9 1950.5,878.9C1951.1,878.9 1951.8,853.5 1952.5,853.5C1953.2,853.5 1953.9,869.6 1954.6,869.6C1955.3,869.6 1955.9,859.0 1956.6,859.0C1957.3,859.0 1958.0,880.0 1958.7,880.0C1959.4,880.0 1960.0,854.4 1960.7,846.6C1961.4,838.9 1962.1,833.5 1962.8,833.5C1963.5,833.5 1964.1,876.7 1964.8,876.7C1965.5,876.7 1966.2,850.4 1966.9,850.4C1967.6,850.4 1968.2,878.9 1968.9,878.9C1969.6,878.9 1970.3,862.0 1971.0,862.0C1971.7,862.0 1972.4,871.8 1973.0,871.8C1973.7,871.8 1974.4,835.7 1975.1,835.7C1975.8,835.7 1976.5,842.5 1977.1,842.5C1977.8,842.5 1978.5,833.7 1979.2,833.7C1979.9,833.7 1980.6,868.6 1981.2,868.6C1981.9,868.6 1982.6,842.7 1983.3,842.7C1984.0,842.7 1984.7,843.1 1985.4,843.7C1986.0,844.3 1986.7,853.3 1987.4,853.3C1988.1,853.3 1988.8,832.4 1989.5,832.4C1990.1,832.4 1990.8,841.9 1991.5,847.3C1992.2,852.7 1992.9,864.9 1993.6,864.9C1994.2,864.9 1994.9,842.5 1995.6,842.5C1996.3,842.5 1997.0,850.2 1997.7,854.5C1998.3,858.8 1999.0,868.3 1999.7,868.3C2000.4,868.3 2001.1,847.4 2001.8,847.4C2002.5,847.4 2003.1,876.6 2003.8,876.6C2004.5,876.6 2005.2,859.7 2005.9,856.0C2006.6,852.2 2007.2,850.4 2007.9,850.4C2008.6,850.4 2009.3,878.8 2010.0,878.8C2010.7,878.8 2011.3,845.5 2012.0,845.5C2012.7,845.5 2013.4,874.3 2014.1,874.3C2014.8,874.3 2015.5,845.4 2016.1,845.4C2016.8,845.4 2017.5,855.9 2018.2,861.2C2018.9,866.5 2019.6,877.2 2020.2,877.2C2020.9,877.2 2021.6,827.3 2022.3,827.3C2023.0,827.3 2023.7,875.3 2024.3,875.3C2025.0,875.3 2025.7,873.7 2026.4,870.5C2027.1,867.3 2027.8,852.5 2028.4,852.5C2029.1,852.5 2029.8,865.9 2030.5,865.9C2031.2,865.9 2031.9,851.2 2032.6,851.2C2033.2,851.2 2033.9,854.0 2034.6,854.0C2035.3,854.0 2036.0,848.7 2036.7,848.7C2037.3,848.7 2038.0,849.3 2038.7,850.4C2039.4,851.5 2040.1,860.4 2040.8,863.2C2041.4,866.0 2042.1,867.4 2042.8,867.4C2043.5,867.4 2044.2,842.5 2044.9,842.5C2045.6,842.5 2046.2,856.2 2046.9,856.2C2047.6,856.2 2048.3,854.6 2049.0,851.4C2049.7,848.3 2050.3,831.1 2051.0,831.1C2051.7,831.1 2052.4,877.7 2053.1,877.7C2053.8,877.7 2054.4,868.6 2055.1,863.9C2055.8,859.1 2056.5,849.2 2057.2,849.2C2057.9,849.2 2058.5,875.3 2059.2,875.3C2059.9,875.3 2060.6,839.3 2061.3,839.3C2062.0,839.3 2062.7,854.5 2063.3,857.5C2064.0,860.4 2064.7,860.0 2065.4,861.8C2066.1,863.6 2066.8,868.1 2067.4,868.1C2068.1,868.1 2068.8,828.4 2069.5,828.4C2070.2,828.4 2070.9,875.7 2071.5,875.7C2072.2,875.7 2072.9,835.8 2073.6,835.8C2074.3,835.8 2075.0,841.8 2075.7,841.8C2076.3,841.8 2077.0,831.8 2077.7,831.8C2078.4,831.8 2079.1,837.1 2079.8,841.8C2080.4,846.5 2081.1,859.9 2081.8,859.9C2082.5,859.9 2083.2,854.3 2083.9,849.3C2084.5,844.3 2085.2,830.0 2085.9,830.0C2086.6,830.0 2087.3,875.1 2088.0,875.1C2088.6,875.1 2089.3,833.3 2090.0,833.3C2090.7,833.3 2091.4,836.7 2092.1,842.2C2092.8,847.7 2093.4,866.5 2094.1,866.5C2094.8,866.5 2095.5,826.6 2096.2,826.6C2096.9,826.6 2097.5,852.5 2098.2,860.7C2098.9,868.8 2099.6,875.6 2100.3,875.6C2101.0,875.6 2101.6,866.2 2102.3,861.7C2103.0,857.3 2103.7,848.7 2104.4,848.7C2105.1,848.7 2105.8,873.4 2106.4,873.4C2107.1,873.4 2107.8,844.1 2108.5,844.1C2109.2,844.1 2109.9,849.2 2110.5,851.3C2111.2,853.4 2111.9,856.7 2112.6,856.7C2113.3,856.7 2114.0,834.6 2114.6,834.6C2115.3,834.6 2116.0,841.3 2116.7,841.3C2117.4,841.3 2118.1,823.1 2118.7,823.1C2119.4,823.1 2120.1,827.5 2120.8,827.6C2121.5,827.7 2122.2,827.7 2122.9,827.7C2123.5,827.7 2124.2,823.6 2124.9,823.6C2125.6,823.6 2126.3,824.9 2127.0,827.4C2127.6,830.0 2128.3,839.2 2129.0,845.7C2129.7,852.3 2130.4,866.8 2131.1,866.8C2131.7,866.8 2132.4,851.8 2133.1,847.0C2133.8,842.1 2134.5,842.3 2135.2,837.7C2135.9,833.1 2136.5,819.3 2137.2,819.3C2137.9,819.3 2138.6,832.7 2139.3,835.2C2140.0,837.6 2140.6,836.4 2141.3,838.9C2142.0,841.4 2142.7,863.6 2143.4,863.6C2144.1,863.6 2144.7,834.2 2145.4,834.2C2146.1,834.2 2146.8,865.4 2147.5,865.4C2148.2,865.4 2148.8,859.6 2149.5,859.6C2150.2,859.6 2150.9,864.4 2151.6,864.4C2152.3,864.4 2153.0,836.0 2153.6,828.6C2154.3,821.3 2155.0,817.6 2155.7,817.6C2156.4,817.6 2157.1,828.0 2157.7,835.2C2158.4,842.4 2159.1,860.9 2159.8,860.9C2160.5,860.9 2161.2,827.2 2161.8,827.2C2162.5,827.2 2163.2,856.0 2163.9,856.0C2164.6,856.0 2165.3,828.2 2166.0,828.2C2166.6,828.2 2167.3,829.7 2168.0,829.7C2168.7,829.7 2169.4,815.8 2170.1,815.8C2170.7,815.8 2171.4,855.6 2172.1,855.6C2172.8,855.6 2173.5,853.4 2174.2,852.0C2174.8,850.7 2175.5,847.5 2176.2,847.5C2176.9,847.5 2177.6,859.8 2178.3,859.8C2178.9,859.8 2179.6,815.1 2180.3,815.1C2181.0,815.1 2181.7,824.4 2182.4,831.6C2183.1,838.8 2183.7,858.1 2184.4,858.1C2185.1,858.1 2185.8,839.0 2186.5,839.0C2187.2,839.0 2187.8,858.5 2188.5,858.5C2189.2,858.5 2189.9,814.0 2190.6,814.0C2191.3,814.0 2191.9,836.8 2192.6,845.0C2193.3,853.3 2194.0,863.4 2194.7,863.4C2195.4,863.4 2196.1,825.4 2196.7,825.4C2197.4,825.4 2198.1,846.5 2198.8,846.5C2199.5,846.5 2200.2,833.9 2200.8,830.0C2201.5,826.2 2202.2,823.2 2202.9,823.2C2203.6,823.2 2204.3,859.5 2204.9,859.5C2205.6,859.5 2206.3,842.7 2207.0,835.2C2207.7,827.7 2208.4,814.4 2209.0,814.4C2209.7,814.4 2210.4,851.5 2211.1,851.5C2211.8,851.5 2212.5,851.1 2213.2,850.3C2213.8,849.5 2214.5,828.4 2215.2,828.4C2215.9,828.4 2216.6,860.0 2217.3,860.0C2217.9,860.0 2218.6,820.8 2219.3,820.8C2220.0,820.8 2220.7,821.6 2221.4,821.6C2222.0,821.6 2222.7,814.1 2223.4,814.1C2224.1,814.1 2224.8,816.7 2225.5,819.8C2226.2,823.0 2226.8,829.6 2227.5,832.8C2228.2,835.9 2228.9,838.9 2229.6,838.9C2230.3,838.9 2230.9,836.4 2231.6,834.9C2232.3,833.3 2233.0,833.1 2233.7,829.7C2234.4,826.2 2235.0,812.1 2235.7,812.1C2236.4,812.1 2237.1,854.4 2237.8,854.4C2238.5,854.4 2239.1,836.7 2239.8,836.7C2240.5,836.7 2241.2,837.4 2241.9,838.9C2242.6,840.4 2243.3,846.9 2243.9,849.3C2244.6,851.8 2245.3,853.5 2246.0,853.5C2246.7,853.5 2247.4,821.5 2248.0,821.5C2248.7,821.5 2249.4,831.7 2250.1,831.7C2250.8,831.7 2251.5,826.3 2252.1,826.3C2252.8,826.3 2253.5,848.4 2254.2,848.4C2254.9,848.4 2255.6,836.9 2256.3,836.9C2256.9,836.9 2257.6,853.1 2258.3,853.3C2259.0,853.6 2259.7,853.5 2260.4,853.7C2261.0,853.9 2261.7,854.5 2262.4,854.5C2263.1,854.5 2263.8,834.2 2264.5,828.1C2265.1,821.9 2265.8,817.8 2266.5,817.8C2267.2,817.8 2267.9,832.0 2268.6,832.0C2269.2,832.0 2269.9,821.2 2270.6,821.2C2271.3,821.2 2272.0,857.3 2272.7,857.3C2273.4,857.3 2274.0,834.7 2274.7,834.7C2275.4,834.7 2276.1,854.1 2276.8,854.1C2277.5,854.1 2278.1,834.4 2278.8,834.4C2279.5,834.4 2280.2,848.6 2280.9,848.6C2281.6,848.6 2282.2,848.5 2282.9,848.4C2283.6,848.2 2284.3,814.2 2285.0,814.2C2285.7,814.2 2286.4,827.5 2287.0,833.3C2287.7,839.2 2288.4,849.1 2289.1,849.1C2289.8,849.1 2290.5,836.5 2291.1,836.5C2291.8,836.5 2292.5,847.2 2293.2,847.2C2293.9,847.2 2294.6,821.1 2295.2,821.1C2295.9,821.1 2296.6,841.7 2297.3,841.7C2298.0,841.7 2298.7,818.9 2299.3,818.9C2300.0,818.9 2300.7,831.8 2301.4,831.8C2302.1,831.8 2302.8,829.1 2303.5,829.1C2304.1,829.1 2304.8,830.8 2305.5,831.5C2306.2,832.1 2306.9,831.9 2307.6,832.8C2308.2,833.6 2308.9,859.9 2309.6,859.9C2310.3,859.9 2311.0,822.7 2311.7,822.7C2312.3,822.7 2313.0,827.0 2313.7,831.9C2314.4,836.8 2315.1,852.2 2315.8,852.2C2316.5,852.2 2317.1,844.5 2317.8,838.3C2318.5,832.2 2319.2,815.2 2319.9,815.2C2320.6,815.2 2321.2,827.2 2321.9,830.7C2322.6,834.2 2323.3,835.2 2324.0,836.1C2324.7,837.0 2325.3,836.6 2326.0,837.4C2326.7,838.3 2327.4,861.3 2328.1,861.3C2328.8,861.3 2329.4,839.6 2330.1,839.6C2330.8,839.6 2331.5,843.0 2332.2,843.0C2332.9,843.0 2333.6,832.4 2334.2,832.4C2334.9,832.4 2335.6,842.7 2336.3,847.0C2337.0,851.4 2337.7,858.4 2338.3,858.4C2339.0,858.4 2339.7,822.3 2340.4,822.3C2341.1,822.3 2341.8,852.5 2342.4,853.3C2343.1,854.2 2343.8,854.7 2344.5,854.7C2345.2,854.7 2345.9,850.1 2346.6,844.0C2347.2,837.9 2347.9,818.0 2348.6,818.0C2349.3,818.0 2350.0,823.7 2350.7,830.6C2351.3,837.5 2352.0,857.8 2352.7,859.4C2353.4,861.0 2354.1,861.8 2354.8,861.8C2355.4,861.8 2356.1,841.1 2356.8,841.1C2357.5,841.1 2358.2,863.7 2358.9,863.7C2359.5,863.7 2360.2,855.2 2360.9,855.2C2361.6,855.2 2362.3,861.1 2363.0,861.1C2363.7,861.1 2364.3,823.2 2365.0,822.5C2365.7,821.8 2366.4,821.4 2367.1,821.4C2367.8,821.4 2368.4,821.7 2369.1,822.3C2369.8,822.8 2370.5,826.2 2371.2,833.3C2371.9,840.5 2372.5,865.0 2373.2,865.0C2373.9,865.0 2374.6,859.7 2375.3,852.9C2376.0,846.2 2376.7,824.6 2377.3,824.6C2378.0,824.6 2378.7,865.1 2379.4,865.1C2380.1,865.1 2380.8,848.1 2381.4,841.7C2382.1,835.2 2382.8,826.5 2383.5,826.5C2384.2,826.5 2384.9,854.3 2385.5,854.3C2386.2,854.3 2386.9,852.8 2387.6,849.8C2388.3,846.8 2389.0,835.7 2389.6,835.1C2390.3,834.5 2391.0,834.2 2391.7,834.2C2392.4,834.2 2393.1,860.2 2393.8,860.2C2394.4,860.2 2395.1,827.6 2395.8,827.6C2396.5,827.6 2397.2,864.1 2397.9,864.1C2398.5,864.1 2399.2,862.2 2399.9,860.3C2400.6,858.4 2401.3,852.5 2402.0,852.5C2402.6,852.5 2403.3,858.6 2404.0,858.6C2404.7,858.6 2405.4,845.7 2406.1,845.7C2406.8,845.7 2407.4,851.2 2408.1,851.2C2408.8,851.2 2409.5,835.1 2410.2,832.2C2410.9,829.2 2411.5,827.7 2412.2,827.7C2412.9,827.7 2413.6,830.2 2414.3,830.2C2415.0,830.2 2415.6,826.0 2416.3,826.0C2417.0,826.0 2417.7,857.3 2418.4,857.3C2419.1,857.3 2419.7,841.1 2420.4,836.8C2421.1,832.4 2421.8,831.7 2422.5,830.2C2423.2,828.7 2423.9,827.9 2424.5,827.9C2425.2,827.9 2425.9,849.5 2426.6,849.5C2427.3,849.5 2428.0,825.3 2428.6,825.3C2429.3,825.3 2430.0,853.1 2430.7,853.1C2431.4,853.1 2432.1,826.1 2432.7,826.1C2433.4,826.1 2434.1,830.4 2434.8,837.5C2435.5,844.6 2436.2,868.9 2436.9,868.9C2437.5,868.9 2438.2,825.3 2438.9,825.3C2439.6,825.3 2440.3,829.6 2441.0,832.8C2441.6,836.1 2442.3,844.8 2443.0,844.8C2443.7,844.8 2444.4,823.7 2445.1,823.7C2445.7,823.7 2446.4,826.2 2447.1,827.6C2447.8,829.0 2448.5,831.0 2449.2,832.1C2449.8,833.2 2450.5,833.4 2451.2,834.2C2451.9,835.0 2452.6,835.1 2453.3,836.7C2454.0,838.4 2454.6,867.8 2455.3,867.8C2456.0,867.8 2456.7,843.8 2457.4,843.8C2458.1,843.8 2458.7,873.7 2459.4,873.7C2460.1,873.7 2460.8,848.1 2461.5,848.1C2462.2,848.1 2462.8,865.4 2463.5,865.4C2464.2,865.4 2464.9,844.6 2465.6,838.2C2466.3,831.9 2467.0,827.4 2467.6,827.4C2468.3,827.4 2469.0,864.0 2469.7,864.0C2470.4,864.0 2471.1,845.7 2471.7,845.7C2472.4,845.7 2473.1,859.9 2473.8,859.9C2474.5,859.9 2475.2,824.5 2475.8,824.5C2476.5,824.5 2477.2,842.4 2477.9,849.3C2478.6,856.1 2479.3,865.8 2479.9,865.8C2480.6,865.8 2481.3,853.8 2482.0,841.7" stroke="#2a9d8f" stroke-width="3.1"/>
</svg>
<div class="a" style="left:939.80px;top:1067.20px;width:1595.50px;height:356.30px;background:#fff;border:1.5px solid #e4e5ea;border-radius:20px;box-shadow:0 1px 3px rgba(16,24,40,0.07),0 1px 2px rgba(16,24,40,0.04);"></div>
<div class="t" style="top:1116.42px;font-size:23.6px;color:#0a0a0a;-webkit-text-stroke:0.7px #0a0a0a;letter-spacing:0.763px;left:982.00px;">Daily history snapshot</div>
<div class="t" style="top:1159.36px;font-size:25.8px;color:#6b7280;letter-spacing:0.062px;left:982.00px;">Latest up, degraded, and down rounds grouped by day.</div>
<div class="a" style="left:981.40px;top:1204.20px;width:362.00px;height:177.00px;background:#fbfbfc;border:1.5px solid #e4e5ea;border-radius:15px;"></div>
<div class="t" style="top:1229.02px;font-size:21px;color:#6b7280;letter-spacing:0.306px;left:1003.90px;">19 Apr</div>
<div class="t" style="top:1228.35px;font-size:21.8px;color:#16a34a;-webkit-text-stroke:0.55px #16a34a;right:1272.00px;text-align:right;">100.0%</div>
<div class="t" style="top:1271.46px;font-size:31px;color:#0a0a0a;font-weight:700;letter-spacing:2.13px;left:1004.00px;">248</div>
<div class="t" style="top:1280.35px;font-size:20.5px;color:#6b7280;left:1069.00px;">checks passed</div>
<div class="a" style="left:1365.40px;top:1204.20px;width:362.00px;height:177.00px;background:#fbfbfc;border:1.5px solid #e4e5ea;border-radius:15px;"></div>
<div class="t" style="top:1229.02px;font-size:21px;color:#6b7280;letter-spacing:0.288px;left:1387.90px;">18 Apr</div>
<div class="t" style="top:1228.35px;font-size:21.8px;color:#16a34a;-webkit-text-stroke:0.55px #16a34a;right:888.00px;text-align:right;">100.0%</div>
<div class="t" style="top:1271.46px;font-size:31px;color:#0a0a0a;font-weight:700;letter-spacing:1.95px;left:1388.00px;">288</div>
<div class="t" style="top:1280.35px;font-size:20.5px;color:#6b7280;left:1453.00px;">checks passed</div>
<div class="a" style="left:1748.50px;top:1204.20px;width:362.00px;height:177.00px;background:#fbfbfc;border:1.5px solid #e4e5ea;border-radius:15px;"></div>
<div class="t" style="top:1229.02px;font-size:21px;color:#6b7280;left:1771.00px;">17 Apr</div>
<div class="t" style="top:1228.35px;font-size:21.8px;color:#dc2626;-webkit-text-stroke:0.55px #dc2626;right:504.90px;text-align:right;">99.0%</div>
<div class="t" style="top:1271.46px;font-size:31px;color:#0a0a0a;font-weight:700;letter-spacing:1.5px;left:1771.10px;">285</div>
<div class="t" style="top:1280.35px;font-size:20.5px;color:#6b7280;left:1836.10px;">checks passed</div>
<div class="a" style="left:1770.40px;top:1322.00px;width:110.20px;height:37.20px;background:#ef4444;border-radius:10px;box-shadow:0 1px 3px rgba(239,68,68,0.3);"></div>
<div class="t" style="top:1329.38px;font-size:22px;color:#fff;-webkit-text-stroke:0.55px #fff;left:1325.50px;width:1000px;text-align:center;">3 down</div>
<div class="a" style="left:2132.00px;top:1204.20px;width:362.00px;height:177.00px;background:#fbfbfc;border:1.5px solid #e4e5ea;border-radius:15px;"></div>
<div class="t" style="top:1229.02px;font-size:21px;color:#6b7280;left:2154.50px;">16 Apr</div>
<div class="t" style="top:1228.35px;font-size:21.8px;color:#16a34a;-webkit-text-stroke:0.55px #16a34a;right:121.40px;text-align:right;">100.0%</div>
<div class="t" style="top:1271.46px;font-size:31px;color:#0a0a0a;font-weight:700;letter-spacing:1.95px;left:2154.60px;">288</div>
<div class="t" style="top:1280.35px;font-size:20.5px;color:#6b7280;left:2219.60px;">checks passed</div>
<div class="a" style="left:939.50px;top:1466.50px;width:152.70px;height:34.80px;background:#fff;border:1.5px solid #e3e4ea;border-radius:14px;"></div>
<div class="t" style="top:1473.92px;font-size:21px;color:#111827;-webkit-text-stroke:0.55px #111827;letter-spacing:0.558px;left:516.13px;width:1000px;text-align:center;">Every 5 min</div>
<div class="a" style="left:1107.80px;top:1466.50px;width:145.40px;height:34.80px;background:#fff;border:1.5px solid #e3e4ea;border-radius:14px;"></div>
<div class="t" style="top:1473.92px;font-size:21px;color:#111827;-webkit-text-stroke:0.55px #111827;letter-spacing:0.792px;left:680.90px;width:1000px;text-align:center;">3 locations</div>
<div class="a" style="left:1268.20px;top:1466.50px;width:155.80px;height:34.80px;background:#fff;border:1.5px solid #e3e4ea;border-radius:14px;"></div>
<div class="t" style="top:1473.92px;font-size:21px;color:#111827;-webkit-text-stroke:0.55px #111827;letter-spacing:0.855px;left:846.53px;width:1000px;text-align:center;">30s timeout</div>
<div class="a" style="left:1439.00px;top:1466.50px;width:253.60px;height:34.80px;background:#fff;border:1.5px solid #e3e4ea;border-radius:14px;"></div>
<div class="t" style="top:1473.92px;font-size:21px;color:#111827;-webkit-text-stroke:0.55px #111827;letter-spacing:0.806px;left:1066.20px;width:1000px;text-align:center;">2 locations for outage</div>
<div class="a" style="left:1709.00px;top:1466.50px;width:229.80px;height:34.80px;background:#fff;border:1.5px solid #e3e4ea;border-radius:14px;"></div>
<div class="t" style="top:1473.92px;font-size:21px;color:#111827;-webkit-text-stroke:0.55px #111827;letter-spacing:0.66px;left:1324.23px;width:1000px;text-align:center;">Alerts: all members</div>
<div class="a" style="left:1954.00px;top:1466.50px;width:232.00px;height:34.80px;background:#fff;border:1.5px solid #e3e4ea;border-radius:14px;"></div>
<div class="t" style="top:1473.92px;font-size:21px;color:#111827;-webkit-text-stroke:0.55px #111827;letter-spacing:0.64px;left:1570.32px;width:1000px;text-align:center;">Alert on: Down only</div>
</div></div>
</body></html>
